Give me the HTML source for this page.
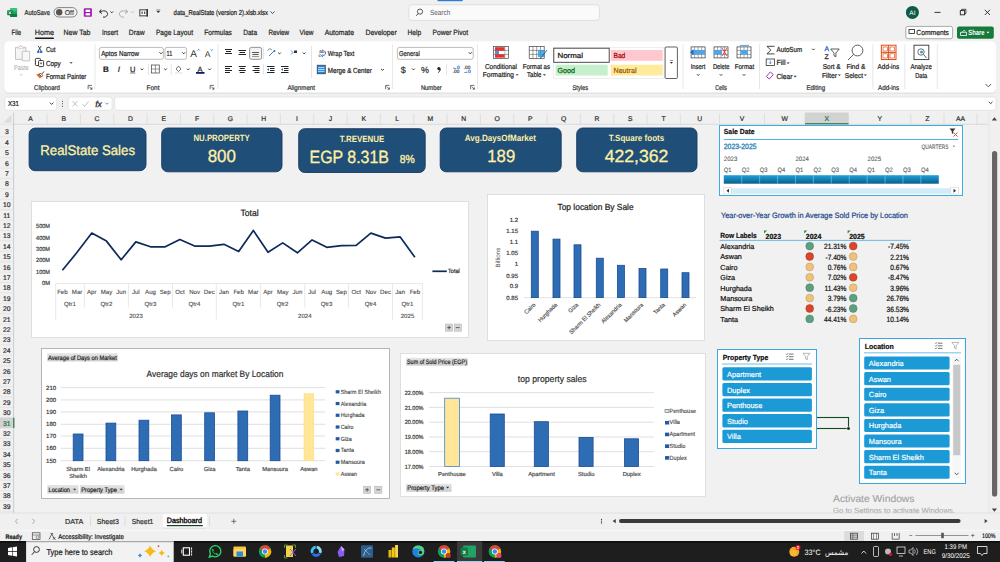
<!DOCTYPE html>
<html><head><meta charset="utf-8"><title>Excel Dashboard</title>
<style>html,body{margin:0;padding:0;background:#f0f0f0;overflow:hidden;width:1000px;height:562px}svg{display:block}text{font-family:"Liberation Sans",sans-serif}</style>
</head><body>
<svg width="1000" height="562" viewBox="0 0 1000 562" text-rendering="geometricPrecision">
<rect x="0.00" y="0.00" width="1000.00" height="562.00" fill="#f0f0f0" />
<rect x="10.00" y="8.30" width="7.10" height="8.60" fill="#21a366" rx="1" />
<rect x="10.00" y="8.30" width="7.10" height="2.90" fill="#33c481" rx="1" />
<rect x="10.00" y="14.00" width="7.10" height="2.90" fill="#107c41" rx="1" />
<rect x="7.20" y="10.20" width="5.40" height="5.00" fill="#107c41" rx="0.6" />
<path d="M8.7,11.4 l2.4,2.6 M11.1,11.4 l-2.4,2.6" fill="none" stroke="#fff" stroke-width="0.9" />
<text x="24.60" y="15.09" font-size="7.2" fill="#262626" font-family="Liberation Sans" textLength="25.40" lengthAdjust="spacingAndGlyphs" stroke="#262626" stroke-width="0.22" >AutoSave</text>
<rect x="54.00" y="7.60" width="23.00" height="9.40" fill="#f3f3f3" stroke="#555" stroke-width="0.7" rx="4.7" />
<circle cx="59.20" cy="12.30" r="3.2" fill="#555" />
<text x="64.80" y="14.92" font-size="7" fill="#333" font-family="Liberation Sans" textLength="9.00" lengthAdjust="spacingAndGlyphs" stroke="#333" stroke-width="0.12" >Off</text>
<rect x="83.80" y="8.30" width="8.10" height="8.50" fill="#a21caf" rx="0.8" />
<rect x="85.60" y="9.70" width="4.50" height="2.30" fill="#fff" />
<rect x="85.60" y="13.20" width="4.50" height="2.20" fill="#fff" />
<path d="M101,9.5 L99.5,12 L102,13.5 M99.8,12 C103,10 108,10.5 107.5,14.5 C107,17 104,17.5 103,17" fill="none" stroke="#333" stroke-width="1" />
<path d="M110.5,11.5 l1.3,1.3 l1.3,-1.3" fill="none" stroke="#222" stroke-width="0.95" />
<path d="M126,9.5 L127.5,12 L125,13.5 M127.2,12 C124,10 119,10.5 119.5,14.5 C120,17 123,17.5 124,17" fill="none" stroke="#aaa" stroke-width="1" />
<path d="M131,11.5 l1.3,1.3 l1.3,-1.3" fill="none" stroke="#aaa" stroke-width="0.8" />
<rect x="139.00" y="9.00" width="9.00" height="7.50" fill="#777" rx="0.5" />
<rect x="140.50" y="10.50" width="6.00" height="4.50" fill="#fff" />
<rect x="141.50" y="11.50" width="1.30" height="2.50" fill="#555" />
<rect x="144.00" y="11.50" width="1.30" height="2.50" fill="#555" />
<rect x="146.50" y="9.00" width="1.50" height="7.50" fill="#333" />
<path d="M156.5,11 l1.8,2 l1.8,-2 z" fill="#333" />
<line x1="156.30" y1="10.00" x2="160.30" y2="10.00" stroke="#333" stroke-width="0.6" />
<text x="173.60" y="15.39" font-size="7.2" fill="#1a1a1a" font-family="Liberation Sans" textLength="94.40" lengthAdjust="spacingAndGlyphs" stroke="#1a1a1a" stroke-width="0.22" >data_RealState (version 2).xlsb.xlsx</text>
<path d="M270.5,11.5 l2,2 l2,-2" fill="none" stroke="#222" stroke-width="0.8" />
<rect x="437.50" y="0.00" width="25.20" height="1.20" fill="#2b7cd3" />
<rect x="408.80" y="4.80" width="190.60" height="15.60" fill="#fafafa" stroke="#d6d6d6" stroke-width="0.7" rx="3" />
<circle cx="420.00" cy="11.60" r="2.6" fill="none" stroke="#444" stroke-width="0.9" />
<line x1="418.20" y1="13.50" x2="416.20" y2="15.80" stroke="#444" stroke-width="0.9" />
<text x="430.00" y="15.26" font-size="7.4" fill="#5a5a5a" font-family="Liberation Sans" textLength="20.20" lengthAdjust="spacingAndGlyphs" >Search</text>
<circle cx="912.40" cy="12.40" r="6.5" fill="#0e5a48" />
<text x="912.40" y="14.94" font-size="6.5" fill="#fff" font-family="Liberation Sans" text-anchor="middle" >AI</text>
<line x1="934.50" y1="12.40" x2="940.50" y2="12.40" stroke="#222" stroke-width="0.9" />
<rect x="960.30" y="10.60" width="4.30" height="4.20" fill="none" stroke="#222" stroke-width="0.9" />
<path d="M961.6,10.6 v-1.3 h4.3 v4.3 h-1.3" fill="none" stroke="#222" stroke-width="0.8" />
<line x1="984.80" y1="9.80" x2="990.00" y2="15.00" stroke="#222" stroke-width="0.9" />
<line x1="990.00" y1="9.80" x2="984.80" y2="15.00" stroke="#222" stroke-width="0.9" />
<text x="11.50" y="35.34" font-size="7.6" fill="#262626" font-family="Liberation Sans" textLength="9.60" lengthAdjust="spacingAndGlyphs" stroke="#262626" stroke-width="0.22" >File</text>
<text x="34.80" y="35.34" font-size="7.6" fill="#262626" font-family="Liberation Sans" textLength="19.20" lengthAdjust="spacingAndGlyphs" stroke="#262626" stroke-width="0.22" >Home</text>
<text x="63.50" y="35.34" font-size="7.6" fill="#262626" font-family="Liberation Sans" textLength="26.90" lengthAdjust="spacingAndGlyphs" stroke="#262626" stroke-width="0.22" >New Tab</text>
<text x="101.90" y="35.34" font-size="7.6" fill="#262626" font-family="Liberation Sans" textLength="16.10" lengthAdjust="spacingAndGlyphs" stroke="#262626" stroke-width="0.22" >Insert</text>
<text x="128.80" y="35.34" font-size="7.6" fill="#262626" font-family="Liberation Sans" textLength="15.80" lengthAdjust="spacingAndGlyphs" stroke="#262626" stroke-width="0.22" >Draw</text>
<text x="155.90" y="35.34" font-size="7.6" fill="#262626" font-family="Liberation Sans" textLength="37.10" lengthAdjust="spacingAndGlyphs" stroke="#262626" stroke-width="0.22" >Page Layout</text>
<text x="204.30" y="35.34" font-size="7.6" fill="#262626" font-family="Liberation Sans" textLength="27.60" lengthAdjust="spacingAndGlyphs" stroke="#262626" stroke-width="0.22" >Formulas</text>
<text x="243.20" y="35.34" font-size="7.6" fill="#262626" font-family="Liberation Sans" textLength="13.90" lengthAdjust="spacingAndGlyphs" stroke="#262626" stroke-width="0.22" >Data</text>
<text x="268.40" y="35.34" font-size="7.6" fill="#262626" font-family="Liberation Sans" textLength="20.80" lengthAdjust="spacingAndGlyphs" stroke="#262626" stroke-width="0.22" >Review</text>
<text x="299.50" y="35.34" font-size="7.6" fill="#262626" font-family="Liberation Sans" textLength="14.00" lengthAdjust="spacingAndGlyphs" stroke="#262626" stroke-width="0.22" >View</text>
<text x="324.70" y="35.34" font-size="7.6" fill="#262626" font-family="Liberation Sans" textLength="29.30" lengthAdjust="spacingAndGlyphs" stroke="#262626" stroke-width="0.22" >Automate</text>
<text x="365.50" y="35.34" font-size="7.6" fill="#262626" font-family="Liberation Sans" textLength="31.20" lengthAdjust="spacingAndGlyphs" stroke="#262626" stroke-width="0.22" >Developer</text>
<text x="407.50" y="35.34" font-size="7.6" fill="#262626" font-family="Liberation Sans" textLength="13.60" lengthAdjust="spacingAndGlyphs" stroke="#262626" stroke-width="0.22" >Help</text>
<text x="432.60" y="35.34" font-size="7.6" fill="#262626" font-family="Liberation Sans" textLength="35.50" lengthAdjust="spacingAndGlyphs" stroke="#262626" stroke-width="0.22" >Power Pivot</text>
<rect x="34.80" y="37.50" width="19.20" height="1.40" fill="#1a1a1a" rx="0.7" />
<rect x="905.80" y="26.40" width="46.80" height="12.30" fill="#fdfdfd" stroke="#8a8a8a" stroke-width="0.7" rx="2" />
<rect x="909.00" y="29.50" width="5.50" height="4.00" fill="none" stroke="#222" stroke-width="0.8" />
<text x="916.30" y="35.36" font-size="7.4" fill="#222" font-family="Liberation Sans" textLength="32.70" lengthAdjust="spacingAndGlyphs" stroke="#222" stroke-width="0.22" >Comments</text>
<rect x="957.00" y="26.40" width="36.80" height="12.30" fill="#157a3c" rx="2" />
<path d="M960.5,35.5 v-3.2 h6 v3.2 z M962,32.3 l2,-2 l1.5,1" fill="none" stroke="#fff" stroke-width="0.8" />
<text x="968.30" y="35.44" font-size="7.6" fill="#fff" font-family="Liberation Sans" font-weight="700" textLength="16.20" lengthAdjust="spacingAndGlyphs" >Share</text>
<path d="M986.5,31.8 l1.5,1.6 l1.5,-1.6 z" fill="#fff" />
<defs><filter id="sh" x="-5%" y="-20%" width="110%" height="150%"><feDropShadow dx="0" dy="0.6" stdDeviation="0.6" flood-color="#000" flood-opacity="0.18"/></filter></defs>
<rect x="4.30" y="41.20" width="991.70" height="51.40" fill="#ffffff" rx="4.5" filter="url(#sh)"/>
<line x1="95.00" y1="44.50" x2="95.00" y2="89.00" stroke="#e1e1e1" stroke-width="0.8" />
<line x1="218.00" y1="44.50" x2="218.00" y2="89.00" stroke="#e1e1e1" stroke-width="0.8" />
<line x1="392.60" y1="44.50" x2="392.60" y2="89.00" stroke="#e1e1e1" stroke-width="0.8" />
<line x1="477.50" y1="44.50" x2="477.50" y2="89.00" stroke="#e1e1e1" stroke-width="0.8" />
<line x1="683.00" y1="44.50" x2="683.00" y2="89.00" stroke="#e1e1e1" stroke-width="0.8" />
<line x1="759.50" y1="44.50" x2="759.50" y2="89.00" stroke="#e1e1e1" stroke-width="0.8" />
<line x1="872.80" y1="44.50" x2="872.80" y2="89.00" stroke="#e1e1e1" stroke-width="0.8" />
<line x1="904.80" y1="44.50" x2="904.80" y2="89.00" stroke="#e1e1e1" stroke-width="0.8" />
<line x1="937.30" y1="44.50" x2="937.30" y2="89.00" stroke="#e1e1e1" stroke-width="0.8" />
<text x="34.00" y="89.88" font-size="6.9" fill="#333" font-family="Liberation Sans" textLength="26.00" lengthAdjust="spacingAndGlyphs" stroke="#333" stroke-width="0.22" >Clipboard</text>
<text x="146.50" y="89.88" font-size="6.9" fill="#333" font-family="Liberation Sans" textLength="13.00" lengthAdjust="spacingAndGlyphs" stroke="#333" stroke-width="0.22" >Font</text>
<text x="287.50" y="89.88" font-size="6.9" fill="#333" font-family="Liberation Sans" textLength="27.50" lengthAdjust="spacingAndGlyphs" stroke="#333" stroke-width="0.22" >Alignment</text>
<text x="420.90" y="89.88" font-size="6.9" fill="#333" font-family="Liberation Sans" textLength="20.80" lengthAdjust="spacingAndGlyphs" stroke="#333" stroke-width="0.22" >Number</text>
<text x="572.50" y="89.88" font-size="6.9" fill="#333" font-family="Liberation Sans" textLength="15.50" lengthAdjust="spacingAndGlyphs" stroke="#333" stroke-width="0.22" >Styles</text>
<text x="715.20" y="89.88" font-size="6.9" fill="#333" font-family="Liberation Sans" textLength="11.80" lengthAdjust="spacingAndGlyphs" stroke="#333" stroke-width="0.22" >Cells</text>
<text x="806.40" y="89.88" font-size="6.9" fill="#333" font-family="Liberation Sans" textLength="18.70" lengthAdjust="spacingAndGlyphs" stroke="#333" stroke-width="0.22" >Editing</text>
<text x="878.00" y="89.88" font-size="6.9" fill="#333" font-family="Liberation Sans" textLength="21.20" lengthAdjust="spacingAndGlyphs" stroke="#333" stroke-width="0.22" >Add-ins</text>
<path d="M88.1,89.2 v-3.8 h3.8 M89.3,86.6 l2.6,2.6 M91.9,87.4 v1.8 h-1.8" fill="none" stroke="#333" stroke-width="0.7" />
<path d="M210.1,89.2 v-3.8 h3.8 M211.3,86.6 l2.6,2.6 M213.9,87.4 v1.8 h-1.8" fill="none" stroke="#333" stroke-width="0.7" />
<path d="M385.6,89.2 v-3.8 h3.8 M386.8,86.6 l2.6,2.6 M389.4,87.4 v1.8 h-1.8" fill="none" stroke="#333" stroke-width="0.7" />
<path d="M470.6,89.2 v-3.8 h3.8 M471.8,86.6 l2.6,2.6 M474.4,87.4 v1.8 h-1.8" fill="none" stroke="#333" stroke-width="0.7" />
<path d="M15.5,47.3 h3.2 l2,-2 l2,2 h3.2 v12.1 h-10.4 z" fill="#f5f5f5" stroke="#b5b5b5" stroke-width="0.8" />
<line x1="17.50" y1="48.60" x2="24.50" y2="48.60" stroke="#c8c8c8" stroke-width="0.6" />
<rect x="22.20" y="51.30" width="7.50" height="9.60" fill="#f7f7f7" stroke="#b5b5b5" stroke-width="0.8" rx="0.8" />
<text x="13.90" y="69.78" font-size="6.9" fill="#a0a0a0" font-family="Liberation Sans" textLength="14.90" lengthAdjust="spacingAndGlyphs" >Paste</text>
<path d="M19.8,74.2 l1.4,1.2 l1.4,-1.2" fill="none" stroke="#a0a0a0" stroke-width="0.6" />
<line x1="38.20" y1="45.90" x2="41.20" y2="51.00" stroke="#222" stroke-width="0.8" />
<line x1="41.20" y1="45.90" x2="38.20" y2="51.00" stroke="#222" stroke-width="0.8" />
<rect x="37.20" y="50.90" width="2.20" height="2.10" fill="#1e6fd0" />
<rect x="40.10" y="50.90" width="2.20" height="2.10" fill="#1e6fd0" />
<text x="45.90" y="52.43" font-size="7.3" fill="#222" font-family="Liberation Sans" textLength="9.60" lengthAdjust="spacingAndGlyphs" stroke="#222" stroke-width="0.22" >Cut</text>
<rect x="35.40" y="58.40" width="5.00" height="7.10" fill="none" stroke="#222" stroke-width="0.9" rx="0.9" />
<rect x="38.60" y="60.50" width="5.00" height="6.10" fill="#fff" stroke="#222" stroke-width="0.9" rx="0.9" />
<rect x="40.30" y="62.50" width="1.60" height="1.70" fill="#555" />
<text x="45.90" y="65.83" font-size="7.3" fill="#222" font-family="Liberation Sans" textLength="14.90" lengthAdjust="spacingAndGlyphs" stroke="#222" stroke-width="0.22" >Copy</text>
<path d="M69.5,62.2 l1.6,1.6 l1.6,-1.6 z" fill="#333" />
<path d="M36.2,74.5 l3.8,4 l2.5,-2.8 l-2.8,-2.4 z" fill="#ec6a1f" />
<path d="M39.5,74.5 l2.2,2.2 l1.2,-1.2 l-2.2,-2.2 z" fill="#fff" stroke="#222" stroke-width="0.7" />
<line x1="42.00" y1="73.80" x2="44.00" y2="71.50" stroke="#222" stroke-width="0.9" />
<text x="45.90" y="79.23" font-size="7.3" fill="#222" font-family="Liberation Sans" textLength="40.50" lengthAdjust="spacingAndGlyphs" stroke="#222" stroke-width="0.22" >Format Painter</text>
<rect x="99.40" y="47.40" width="64.00" height="11.90" fill="#fff" stroke="#8f8f8f" stroke-width="0.6" rx="2" />
<text x="101.20" y="55.83" font-size="7.3" fill="#222" font-family="Liberation Sans" textLength="37.90" lengthAdjust="spacingAndGlyphs" stroke="#222" stroke-width="0.22" >Aptos Narrow</text>
<path d="M159.5,52.3 l1.5,1.5 l1.5,-1.5" fill="none" stroke="#222" stroke-width="0.95" />
<rect x="165.00" y="47.40" width="21.60" height="11.90" fill="#fff" stroke="#8f8f8f" stroke-width="0.6" rx="2" />
<text x="166.60" y="55.83" font-size="7.3" fill="#222" font-family="Liberation Sans" textLength="5.60" lengthAdjust="spacingAndGlyphs" stroke="#222" stroke-width="0.22" >11</text>
<path d="M182.2,52.3 l1.5,1.5 l1.5,-1.5" fill="none" stroke="#222" stroke-width="0.95" />
<text x="193.50" y="57.40" font-size="10" fill="#333" font-family="Liberation Sans" text-anchor="middle" >A</text>
<path d="M197.5,50.5 l1.2,-1.2 l1.2,1.2" fill="none" stroke="#1e6fd0" stroke-width="0.7" />
<text x="207.60" y="57.06" font-size="8.5" fill="#333" font-family="Liberation Sans" text-anchor="middle" >A</text>
<path d="M210.5,49.5 l1.2,1.2 l1.2,-1.2" fill="none" stroke="#1e6fd0" stroke-width="0.7" />
<text x="106.00" y="72.08" font-size="8" fill="#222" font-family="Liberation Sans" font-weight="700" text-anchor="middle" stroke="#222" stroke-width="0.22" >B</text>
<text x="118.80" y="72.08" font-size="8" fill="#222" font-family="Liberation Serif" text-anchor="middle" stroke="#222" stroke-width="0.22" font-style="italic">I</text>
<text x="132.70" y="71.50" font-size="7.5" fill="#222" font-family="Liberation Sans" text-anchor="middle" stroke="#222" stroke-width="0.22" >U</text>
<line x1="130.00" y1="73.00" x2="135.40" y2="73.00" stroke="#222" stroke-width="0.6" />
<path d="M140.7,68.6 l1.3,1.3 l1.3,-1.3" fill="none" stroke="#222" stroke-width="0.95" />
<path d="M164.2,68.6 l1.3,1.3 l1.3,-1.3" fill="none" stroke="#222" stroke-width="0.95" />
<path d="M187.0,68.6 l1.3,1.3 l1.3,-1.3" fill="none" stroke="#222" stroke-width="0.95" />
<path d="M208.29999999999998,68.6 l1.3,1.3 l1.3,-1.3" fill="none" stroke="#222" stroke-width="0.95" />
<line x1="148.50" y1="64.00" x2="148.50" y2="75.00" stroke="#d8d8d8" stroke-width="0.7" />
<rect x="151.50" y="65.00" width="7.80" height="8.00" fill="none" stroke="#555" stroke-width="0.8" />
<line x1="155.40" y1="65.00" x2="155.40" y2="73.00" stroke="#555" stroke-width="0.6" />
<line x1="151.50" y1="69.00" x2="159.30" y2="69.00" stroke="#555" stroke-width="0.6" />
<line x1="171.30" y1="64.00" x2="171.30" y2="75.00" stroke="#d8d8d8" stroke-width="0.7" />
<path d="M176,69 l2.5,-3 l2.5,3 l-2.5,2.5 z" fill="none" stroke="#333" stroke-width="0.7" />
<rect x="175.00" y="72.30" width="7.50" height="1.30" fill="#e6e6e6" />
<text x="200.00" y="71.50" font-size="7.5" fill="#333" font-family="Liberation Sans" text-anchor="middle" stroke="#333" stroke-width="0.22" >A</text>
<rect x="196.00" y="72.00" width="8.50" height="1.80" fill="#0e1d6b" />
<line x1="225.00" y1="49.50" x2="232.00" y2="49.50" stroke="#222" stroke-width="1" />
<line x1="226.00" y1="51.50" x2="231.00" y2="51.50" stroke="#222" stroke-width="1" />
<line x1="225.00" y1="53.50" x2="232.00" y2="53.50" stroke="#222" stroke-width="1" />
<line x1="238.50" y1="50.50" x2="246.00" y2="50.50" stroke="#222" stroke-width="1" />
<line x1="239.50" y1="52.50" x2="245.00" y2="52.50" stroke="#222" stroke-width="1" />
<line x1="238.50" y1="54.50" x2="246.00" y2="54.50" stroke="#222" stroke-width="1" />
<rect x="249.60" y="47.40" width="12.00" height="11.90" fill="#f3f3f3" stroke="#7a7a7a" stroke-width="0.8" rx="1.8" />
<line x1="252.00" y1="52.50" x2="259.00" y2="52.50" stroke="#555" stroke-width="1" />
<line x1="252.50" y1="54.50" x2="258.50" y2="54.50" stroke="#555" stroke-width="1" />
<line x1="252.00" y1="56.50" x2="259.00" y2="56.50" stroke="#999" stroke-width="1" />
<line x1="263.40" y1="46.50" x2="263.40" y2="59.00" stroke="#d8d8d8" stroke-width="0.7" />
<line x1="263.40" y1="64.00" x2="263.40" y2="75.00" stroke="#d8d8d8" stroke-width="0.7" />
<path d="M269,56 l5,-5" fill="none" stroke="#1e6fd0" stroke-width="0.9" />
<circle cx="274.50" cy="51.00" r="0.9" fill="#1e6fd0" />
<path d="M267.5,50.5 l2.5,-2 l2,1.5" fill="none" stroke="#444" stroke-width="0.6" />
<path d="M278.2,52.6 l1.3,1.3 l1.3,-1.3" fill="none" stroke="#222" stroke-width="0.95" />
<line x1="225.00" y1="66.50" x2="232.00" y2="66.50" stroke="#222" stroke-width="1" />
<line x1="238.75" y1="66.50" x2="245.75" y2="66.50" stroke="#222" stroke-width="1" />
<line x1="252.50" y1="66.50" x2="259.50" y2="66.50" stroke="#222" stroke-width="1" />
<line x1="225.00" y1="68.50" x2="230.00" y2="68.50" stroke="#222" stroke-width="1" />
<line x1="239.75" y1="68.50" x2="244.75" y2="68.50" stroke="#222" stroke-width="1" />
<line x1="254.50" y1="68.50" x2="259.50" y2="68.50" stroke="#222" stroke-width="1" />
<line x1="225.00" y1="70.50" x2="232.00" y2="70.50" stroke="#222" stroke-width="1" />
<line x1="238.75" y1="70.50" x2="245.75" y2="70.50" stroke="#222" stroke-width="1" />
<line x1="252.50" y1="70.50" x2="259.50" y2="70.50" stroke="#222" stroke-width="1" />
<line x1="225.00" y1="72.50" x2="230.00" y2="72.50" stroke="#222" stroke-width="1" />
<line x1="239.75" y1="72.50" x2="244.75" y2="72.50" stroke="#222" stroke-width="1" />
<line x1="254.50" y1="72.50" x2="259.50" y2="72.50" stroke="#222" stroke-width="1" />
<line x1="267.00" y1="66.50" x2="274.50" y2="66.50" stroke="#222" stroke-width="1" />
<line x1="270.00" y1="68.50" x2="274.50" y2="68.50" stroke="#222" stroke-width="1" />
<line x1="270.00" y1="70.50" x2="274.50" y2="70.50" stroke="#222" stroke-width="1" />
<line x1="267.00" y1="72.50" x2="274.50" y2="72.50" stroke="#222" stroke-width="1" />
<path d="M267,69.5 l2,-1.6 v3.2 z" fill="#1e6fd0" />
<line x1="281.00" y1="66.50" x2="288.50" y2="66.50" stroke="#222" stroke-width="1" />
<line x1="284.00" y1="68.50" x2="288.50" y2="68.50" stroke="#222" stroke-width="1" />
<line x1="284.00" y1="70.50" x2="288.50" y2="70.50" stroke="#222" stroke-width="1" />
<line x1="281.00" y1="72.50" x2="288.50" y2="72.50" stroke="#222" stroke-width="1" />
<path d="M281,69.5 l2,-1.6 v3.2 z" fill="#1e6fd0" />
<path d="M291,50.5 l2,2 l-2,2" fill="none" stroke="#1e6fd0" stroke-width="0.8" />
<rect x="294.00" y="50.50" width="3.00" height="2.50" fill="#333" />
<path d="M302.8,52.6 l1.3,1.3 l1.3,-1.3" fill="none" stroke="#222" stroke-width="0.95" />
<line x1="311.50" y1="46.00" x2="311.50" y2="78.00" stroke="#d8d8d8" stroke-width="0.7" />
<text x="322.00" y="52.53" font-size="4.8" fill="#333" font-family="Liberation Sans" text-anchor="middle" stroke="#333" stroke-width="0.1" >ab</text>
<text x="319.60" y="57.03" font-size="4.8" fill="#333" font-family="Liberation Sans" text-anchor="middle" stroke="#333" stroke-width="0.1" >c</text>
<path d="M325.5,51.5 q1,3.5 -3.2,4.3" fill="none" stroke="#1e6fd0" stroke-width="0.9" />
<path d="M322.8,54.3 l-1.4,1.6 l1.8,1" fill="none" stroke="#1e6fd0" stroke-width="0.8" />
<text x="327.80" y="56.43" font-size="7.3" fill="#222" font-family="Liberation Sans" textLength="26.70" lengthAdjust="spacingAndGlyphs" stroke="#222" stroke-width="0.22" >Wrap Text</text>
<rect x="317.20" y="65.20" width="8.10" height="8.60" fill="#1e88e5" stroke="#3a3a3a" stroke-width="0.7" />
<line x1="318.00" y1="67.60" x2="324.50" y2="67.60" stroke="#fff" stroke-width="0.7" />
<line x1="318.00" y1="69.50" x2="324.50" y2="69.50" stroke="#fff" stroke-width="0.7" />
<line x1="318.00" y1="71.40" x2="324.50" y2="71.40" stroke="#fff" stroke-width="0.7" />
<text x="327.80" y="72.83" font-size="7.3" fill="#222" font-family="Liberation Sans" textLength="44.00" lengthAdjust="spacingAndGlyphs" stroke="#222" stroke-width="0.22" >Merge &amp; Center</text>
<path d="M381.2,69 l1.3,1.3 l1.3,-1.3" fill="none" stroke="#222" stroke-width="0.95" />
<rect x="397.40" y="47.40" width="75.80" height="11.90" fill="#fff" stroke="#8f8f8f" stroke-width="0.6" rx="2" />
<text x="399.00" y="55.76" font-size="7.1" fill="#222" font-family="Liberation Sans" textLength="20.80" lengthAdjust="spacingAndGlyphs" stroke="#222" stroke-width="0.22" >General</text>
<path d="M468.8,52.3 l1.5,1.5 l1.5,-1.5" fill="none" stroke="#222" stroke-width="0.95" />
<text x="403.30" y="73.24" font-size="9" fill="#333" font-family="Liberation Sans" text-anchor="middle" stroke="#333" stroke-width="0.22" >$</text>
<path d="M412.1,68.6 l1.3,1.3 l1.3,-1.3" fill="none" stroke="#222" stroke-width="0.95" />
<text x="425.00" y="73.04" font-size="9" fill="#333" font-family="Liberation Sans" text-anchor="middle" stroke="#333" stroke-width="0.22" >%</text>
<circle cx="438.90" cy="68.60" r="1.6" fill="#222" />
<path d="M440.3,69 q0,2.5 -2.2,3.6" fill="none" stroke="#222" stroke-width="1" />
<line x1="446.50" y1="64.00" x2="446.50" y2="75.00" stroke="#d8d8d8" stroke-width="0.7" />
<text x="456.00" y="69.03" font-size="4.8" fill="#1e6fd0" font-family="Liberation Sans" text-anchor="middle" stroke="#1e6fd0" stroke-width="0.22" >←0</text>
<text x="456.00" y="73.23" font-size="4.8" fill="#555" font-family="Liberation Sans" text-anchor="middle" stroke="#555" stroke-width="0.22" >.00</text>
<text x="467.00" y="69.03" font-size="4.8" fill="#555" font-family="Liberation Sans" text-anchor="middle" stroke="#555" stroke-width="0.22" >.00</text>
<text x="467.00" y="73.23" font-size="4.8" fill="#1e6fd0" font-family="Liberation Sans" text-anchor="middle" stroke="#1e6fd0" stroke-width="0.22" >→0</text>
<rect x="493.50" y="46.40" width="15.00" height="12.00" fill="#fff" stroke="#444" stroke-width="0.7" />
<line x1="497.25" y1="46.40" x2="497.25" y2="58.40" stroke="#444" stroke-width="0.5" />
<line x1="501.00" y1="46.40" x2="501.00" y2="58.40" stroke="#444" stroke-width="0.5" />
<line x1="504.75" y1="46.40" x2="504.75" y2="58.40" stroke="#444" stroke-width="0.5" />
<line x1="493.50" y1="50.40" x2="508.50" y2="50.40" stroke="#444" stroke-width="0.5" />
<line x1="493.50" y1="54.40" x2="508.50" y2="54.40" stroke="#444" stroke-width="0.5" />
<rect x="495.00" y="47.20" width="9.50" height="3.60" fill="#e8312f" />
<rect x="495.00" y="51.00" width="4.00" height="3.00" fill="#2f9ee5" />
<rect x="499.00" y="51.00" width="5.50" height="3.00" fill="#fff" />
<rect x="495.00" y="54.20" width="9.50" height="3.40" fill="#e8312f" />
<text x="485.00" y="69.16" font-size="7.1" fill="#222" font-family="Liberation Sans" textLength="32.00" lengthAdjust="spacingAndGlyphs" stroke="#222" stroke-width="0.22" >Conditional</text>
<text x="482.80" y="77.36" font-size="7.1" fill="#222" font-family="Liberation Sans" textLength="31.20" lengthAdjust="spacingAndGlyphs" stroke="#222" stroke-width="0.22" >Formatting</text>
<path d="M515.5,74.2 l1.6,1.6 l1.6,-1.6 z" fill="#333" />
<rect x="529.20" y="46.40" width="15.00" height="12.00" fill="#fff" stroke="#444" stroke-width="0.7" />
<line x1="532.95" y1="46.40" x2="532.95" y2="58.40" stroke="#444" stroke-width="0.5" />
<line x1="536.70" y1="46.40" x2="536.70" y2="58.40" stroke="#444" stroke-width="0.5" />
<line x1="540.45" y1="46.40" x2="540.45" y2="58.40" stroke="#444" stroke-width="0.5" />
<line x1="529.20" y1="50.40" x2="544.20" y2="50.40" stroke="#444" stroke-width="0.5" />
<line x1="529.20" y1="54.40" x2="544.20" y2="54.40" stroke="#444" stroke-width="0.5" />
<rect x="538.00" y="50.00" width="7.00" height="7.00" fill="#2f9ee5" opacity="0.85"/>
<path d="M540,59 l7,-9" fill="none" stroke="#555" stroke-width="0.9" />
<text x="522.80" y="69.16" font-size="7.1" fill="#222" font-family="Liberation Sans" textLength="27.20" lengthAdjust="spacingAndGlyphs" stroke="#222" stroke-width="0.22" >Format as</text>
<text x="527.00" y="77.36" font-size="7.1" fill="#222" font-family="Liberation Sans" textLength="14.50" lengthAdjust="spacingAndGlyphs" stroke="#222" stroke-width="0.22" >Table</text>
<path d="M542.8,74.2 l1.6,1.6 l1.6,-1.6 z" fill="#333" />
<rect x="553.30" y="47.30" width="110.70" height="31.20" fill="#fff" stroke="#e3e3e3" stroke-width="0.6" />
<rect x="553.80" y="48.20" width="55.40" height="14.10" fill="#fff" stroke="#3a3a3a" stroke-width="0.9" />
<text x="557.50" y="57.93" font-size="7.3" fill="#111" font-family="Liberation Sans" textLength="25.50" lengthAdjust="spacingAndGlyphs" stroke="#111" stroke-width="0.22" >Normal</text>
<rect x="610.70" y="50.00" width="52.00" height="10.80" fill="#ffc7ce" />
<text x="613.50" y="57.93" font-size="7.3" fill="#9c0006" font-family="Liberation Sans" textLength="11.80" lengthAdjust="spacingAndGlyphs" stroke="#9c0006" stroke-width="0.22" >Bad</text>
<rect x="555.70" y="64.70" width="52.00" height="10.80" fill="#c6efce" />
<text x="557.50" y="72.83" font-size="7.3" fill="#006100" font-family="Liberation Sans" textLength="17.50" lengthAdjust="spacingAndGlyphs" stroke="#006100" stroke-width="0.22" >Good</text>
<rect x="610.70" y="64.70" width="52.00" height="10.80" fill="#ffeb9c" />
<text x="613.50" y="72.83" font-size="7.3" fill="#9c5700" font-family="Liberation Sans" textLength="23.00" lengthAdjust="spacingAndGlyphs" stroke="#9c5700" stroke-width="0.22" >Neutral</text>
<rect x="665.10" y="47.00" width="12.30" height="31.50" fill="#fff" stroke="#3a3a3a" stroke-width="0.8" rx="1" />
<path d="M669.8,62 l1.6,1.8 l1.6,-1.8 z" fill="#333" />
<line x1="669.80" y1="60.50" x2="673.00" y2="60.50" stroke="#333" stroke-width="0.5" />
<rect x="691.10" y="46.90" width="14.00" height="11.00" fill="#fff" stroke="#333" stroke-width="0.7" />
<line x1="694.60" y1="46.90" x2="694.60" y2="57.90" stroke="#555" stroke-width="0.5" />
<line x1="698.10" y1="46.90" x2="698.10" y2="57.90" stroke="#555" stroke-width="0.5" />
<line x1="701.60" y1="46.90" x2="701.60" y2="57.90" stroke="#555" stroke-width="0.5" />
<line x1="691.10" y1="50.40" x2="705.10" y2="50.40" stroke="#555" stroke-width="0.5" />
<line x1="691.10" y1="54.40" x2="705.10" y2="54.40" stroke="#555" stroke-width="0.5" />
<rect x="691.00" y="50.00" width="14.00" height="4.50" fill="#4ea5e8" />
<path d="M690,52.3 l3.5,-3 v6 z" fill="#1e6fd0" />
<rect x="714.00" y="46.90" width="14.00" height="11.00" fill="#fff" stroke="#333" stroke-width="0.7" />
<line x1="717.50" y1="46.90" x2="717.50" y2="57.90" stroke="#555" stroke-width="0.5" />
<line x1="721.00" y1="46.90" x2="721.00" y2="57.90" stroke="#555" stroke-width="0.5" />
<line x1="724.50" y1="46.90" x2="724.50" y2="57.90" stroke="#555" stroke-width="0.5" />
<line x1="714.00" y1="50.40" x2="728.00" y2="50.40" stroke="#555" stroke-width="0.5" />
<line x1="714.00" y1="54.40" x2="728.00" y2="54.40" stroke="#555" stroke-width="0.5" />
<rect x="714.00" y="50.00" width="8.00" height="4.50" fill="#4ea5e8" />
<line x1="722.00" y1="48.00" x2="727.00" y2="56.00" stroke="#e8312f" stroke-width="0.9" />
<line x1="727.00" y1="48.00" x2="722.00" y2="56.00" stroke="#e8312f" stroke-width="0.9" />
<rect x="737.00" y="46.90" width="14.00" height="11.00" fill="#fff" stroke="#333" stroke-width="0.7" />
<line x1="740.50" y1="46.90" x2="740.50" y2="57.90" stroke="#555" stroke-width="0.5" />
<line x1="744.00" y1="46.90" x2="744.00" y2="57.90" stroke="#555" stroke-width="0.5" />
<line x1="747.50" y1="46.90" x2="747.50" y2="57.90" stroke="#555" stroke-width="0.5" />
<line x1="737.00" y1="50.40" x2="751.00" y2="50.40" stroke="#555" stroke-width="0.5" />
<line x1="737.00" y1="54.40" x2="751.00" y2="54.40" stroke="#555" stroke-width="0.5" />
<rect x="741.00" y="50.00" width="7.00" height="4.50" fill="#4ea5e8" />
<line x1="740.00" y1="45.40" x2="749.00" y2="45.40" stroke="#4ea5e8" stroke-width="1" />
<text x="690.70" y="69.36" font-size="7.1" fill="#222" font-family="Liberation Sans" textLength="14.70" lengthAdjust="spacingAndGlyphs" stroke="#222" stroke-width="0.22" >Insert</text>
<text x="712.90" y="69.36" font-size="7.1" fill="#222" font-family="Liberation Sans" textLength="16.70" lengthAdjust="spacingAndGlyphs" stroke="#222" stroke-width="0.22" >Delete</text>
<text x="734.70" y="69.36" font-size="7.1" fill="#222" font-family="Liberation Sans" textLength="19.50" lengthAdjust="spacingAndGlyphs" stroke="#222" stroke-width="0.22" >Format</text>
<path d="M697.0,74.3 l1.2,1.2 l1.2,-1.2" fill="none" stroke="#222" stroke-width="0.95" />
<path d="M719.8,74.3 l1.2,1.2 l1.2,-1.2" fill="none" stroke="#222" stroke-width="0.95" />
<path d="M742.8,74.3 l1.2,1.2 l1.2,-1.2" fill="none" stroke="#222" stroke-width="0.95" />
<path d="M774.5,46.3 h-7.6 l4,3.8 l-4,3.8 h7.6" fill="none" stroke="#333" stroke-width="0.9" />
<text x="776.50" y="52.23" font-size="7.3" fill="#222" font-family="Liberation Sans" textLength="25.70" lengthAdjust="spacingAndGlyphs" stroke="#222" stroke-width="0.22" >AutoSum</text>
<path d="M812.2,48.8 l1.2,1.2 l1.2,-1.2" fill="none" stroke="#222" stroke-width="0.95" />
<rect x="766.20" y="59.00" width="8.20" height="6.50" fill="#fff" stroke="#333" stroke-width="0.8" />
<path d="M770.3,60.5 v3 M769,62.5 l1.3,1.3 l1.3,-1.3" fill="none" stroke="#1e6fd0" stroke-width="0.7" />
<text x="776.50" y="65.43" font-size="7.3" fill="#222" font-family="Liberation Sans" textLength="9.00" lengthAdjust="spacingAndGlyphs" stroke="#222" stroke-width="0.22" >Fill</text>
<path d="M786.5,62.5 l1.6,1.6 l1.6,-1.6 z" fill="#333" />
<path d="M766.3,76.5 l4,-4.5 l3,2.5 l-4,4.5 z" fill="#fff" stroke="#a637b8" stroke-width="1" />
<text x="776.50" y="78.83" font-size="7.3" fill="#222" font-family="Liberation Sans" textLength="16.00" lengthAdjust="spacingAndGlyphs" stroke="#222" stroke-width="0.22" >Clear</text>
<path d="M793.5,75.8 l1.6,1.6 l1.6,-1.6 z" fill="#333" />
<text x="826.70" y="51.35" font-size="6.8" fill="#1e6fd0" font-family="Liberation Sans" text-anchor="middle" stroke="#1e6fd0" stroke-width="0.3" >A</text>
<text x="826.70" y="58.65" font-size="6.8" fill="#333" font-family="Liberation Sans" text-anchor="middle" stroke="#333" stroke-width="0.3" >Z</text>
<path d="M830.7,49 h8.5 l-3.3,4 v3.7 l-1.9,-0.9 v-2.8 z" fill="none" stroke="#333" stroke-width="0.8" />
<text x="822.80" y="69.36" font-size="7.1" fill="#222" font-family="Liberation Sans" textLength="17.80" lengthAdjust="spacingAndGlyphs" stroke="#222" stroke-width="0.22" >Sort &amp;</text>
<text x="821.90" y="77.56" font-size="7.1" fill="#222" font-family="Liberation Sans" textLength="15.10" lengthAdjust="spacingAndGlyphs" stroke="#222" stroke-width="0.22" >Filter</text>
<path d="M837.8,74.5 l1.6,1.6 l1.6,-1.6 z" fill="#333" />
<circle cx="857.50" cy="50.50" r="5.4" fill="none" stroke="#333" stroke-width="0.8" />
<line x1="853.70" y1="54.30" x2="848.00" y2="60.00" stroke="#333" stroke-width="0.8" />
<text x="846.40" y="69.36" font-size="7.1" fill="#222" font-family="Liberation Sans" textLength="18.90" lengthAdjust="spacingAndGlyphs" stroke="#222" stroke-width="0.22" >Find &amp;</text>
<text x="844.80" y="77.56" font-size="7.1" fill="#222" font-family="Liberation Sans" textLength="18.20" lengthAdjust="spacingAndGlyphs" stroke="#222" stroke-width="0.22" >Select</text>
<path d="M863.8,74.5 l1.6,1.6 l1.6,-1.6 z" fill="#333" />
<rect x="881.30" y="45.20" width="14.70" height="14.40" fill="none" stroke="#d83b01" stroke-width="0.9" />
<line x1="888.65" y1="45.20" x2="888.65" y2="59.60" stroke="#d83b01" stroke-width="0.9" />
<line x1="881.30" y1="52.40" x2="896.00" y2="52.40" stroke="#d83b01" stroke-width="0.9" />
<rect x="883.00" y="47.00" width="4.30" height="4.00" fill="none" stroke="#d83b01" stroke-width="0.6" />
<rect x="890.00" y="47.00" width="4.30" height="4.00" fill="none" stroke="#d83b01" stroke-width="0.6" />
<rect x="883.00" y="53.80" width="4.30" height="4.20" fill="none" stroke="#d83b01" stroke-width="0.6" />
<rect x="890.00" y="53.80" width="4.30" height="4.20" fill="none" stroke="#d83b01" stroke-width="0.6" />
<text x="877.60" y="69.36" font-size="7.1" fill="#222" font-family="Liberation Sans" textLength="21.60" lengthAdjust="spacingAndGlyphs" stroke="#222" stroke-width="0.22" >Add-ins</text>
<rect x="914.00" y="45.20" width="14.80" height="14.40" fill="#fff" stroke="#333" stroke-width="0.9" />
<circle cx="921.00" cy="52.00" r="3.2" fill="none" stroke="#333" stroke-width="0.7" />
<circle cx="921.50" cy="52.00" r="1.5" fill="#2f9ee5" />
<line x1="923.50" y1="54.50" x2="926.50" y2="58.00" stroke="#333" stroke-width="0.8" />
<text x="910.40" y="69.36" font-size="7.1" fill="#222" font-family="Liberation Sans" textLength="21.60" lengthAdjust="spacingAndGlyphs" stroke="#222" stroke-width="0.22" >Analyze</text>
<text x="915.20" y="77.56" font-size="7.1" fill="#222" font-family="Liberation Sans" textLength="12.00" lengthAdjust="spacingAndGlyphs" stroke="#222" stroke-width="0.22" >Data</text>
<path d="M985.5,84 l2.8,2.8 l2.8,-2.8" fill="none" stroke="#333" stroke-width="0.8" />
<rect x="4.80" y="97.00" width="51.90" height="13.30" fill="#fff" stroke="#dcdcdc" stroke-width="0.7" rx="2.5" />
<text x="8.00" y="106.39" font-size="7.2" fill="#222" font-family="Liberation Sans" textLength="11.00" lengthAdjust="spacingAndGlyphs" stroke="#222" stroke-width="0.22" >X31</text>
<path d="M49.8,102.6 l1.8,1.8 l1.8,-1.8" fill="none" stroke="#333" stroke-width="0.9" />
<circle cx="62.50" cy="101.30" r="0.55" fill="#333" />
<circle cx="62.50" cy="103.80" r="0.55" fill="#333" />
<circle cx="62.50" cy="106.30" r="0.55" fill="#333" />
<rect x="68.20" y="97.00" width="43.90" height="13.30" fill="#fff" stroke="#dcdcdc" stroke-width="0.7" rx="2.5" />
<line x1="72.50" y1="101.00" x2="77.50" y2="106.50" stroke="#aaa" stroke-width="0.7" />
<line x1="77.50" y1="101.00" x2="72.50" y2="106.50" stroke="#aaa" stroke-width="0.7" />
<path d="M82.5,104 l2,2.5 l4,-5" fill="none" stroke="#aaa" stroke-width="0.7" />
<text x="98.50" y="106.70" font-size="8.6" fill="#222" font-family="Liberation Serif" text-anchor="middle" stroke="#222" stroke-width="0.25" font-style="italic">fx</text>
<path d="M105.5,102.8 l1.5,1.5 l1.5,-1.5" fill="none" stroke="#555" stroke-width="0.7" />
<rect x="114.70" y="97.00" width="881.30" height="13.30" fill="#fff" stroke="#dcdcdc" stroke-width="0.7" rx="2.5" />
<path d="M988.9,101.8 l1.8,1.8 l1.8,-1.8" fill="none" stroke="#222" stroke-width="0.9" />
<rect x="0.00" y="112.50" width="988.50" height="11.80" fill="#f0f0f0" />
<rect x="0.00" y="124.30" width="988.50" height="388.70" fill="#f1f1f1" />
<rect x="805.00" y="112.50" width="43.50" height="11.80" fill="#d2d2d2" />
<line x1="47.08" y1="113.50" x2="47.08" y2="124.30" stroke="#d4d4d4" stroke-width="0.6" />
<text x="30.41" y="121.35" font-size="6.8" fill="#333" font-family="Liberation Sans" text-anchor="middle" stroke="#333" stroke-width="0.22" >A</text>
<line x1="80.41" y1="113.50" x2="80.41" y2="124.30" stroke="#d4d4d4" stroke-width="0.6" />
<text x="63.74" y="121.35" font-size="6.8" fill="#333" font-family="Liberation Sans" text-anchor="middle" stroke="#333" stroke-width="0.22" >B</text>
<line x1="113.74" y1="113.50" x2="113.74" y2="124.30" stroke="#d4d4d4" stroke-width="0.6" />
<text x="97.07" y="121.35" font-size="6.8" fill="#333" font-family="Liberation Sans" text-anchor="middle" stroke="#333" stroke-width="0.22" >C</text>
<line x1="147.07" y1="113.50" x2="147.07" y2="124.30" stroke="#d4d4d4" stroke-width="0.6" />
<text x="130.41" y="121.35" font-size="6.8" fill="#333" font-family="Liberation Sans" text-anchor="middle" stroke="#333" stroke-width="0.22" >D</text>
<line x1="180.40" y1="113.50" x2="180.40" y2="124.30" stroke="#d4d4d4" stroke-width="0.6" />
<text x="163.73" y="121.35" font-size="6.8" fill="#333" font-family="Liberation Sans" text-anchor="middle" stroke="#333" stroke-width="0.22" >E</text>
<line x1="213.73" y1="113.50" x2="213.73" y2="124.30" stroke="#d4d4d4" stroke-width="0.6" />
<text x="197.06" y="121.35" font-size="6.8" fill="#333" font-family="Liberation Sans" text-anchor="middle" stroke="#333" stroke-width="0.22" >F</text>
<line x1="247.06" y1="113.50" x2="247.06" y2="124.30" stroke="#d4d4d4" stroke-width="0.6" />
<text x="230.39" y="121.35" font-size="6.8" fill="#333" font-family="Liberation Sans" text-anchor="middle" stroke="#333" stroke-width="0.22" >G</text>
<line x1="280.39" y1="113.50" x2="280.39" y2="124.30" stroke="#d4d4d4" stroke-width="0.6" />
<text x="263.72" y="121.35" font-size="6.8" fill="#333" font-family="Liberation Sans" text-anchor="middle" stroke="#333" stroke-width="0.22" >H</text>
<line x1="313.72" y1="113.50" x2="313.72" y2="124.30" stroke="#d4d4d4" stroke-width="0.6" />
<text x="297.05" y="121.35" font-size="6.8" fill="#333" font-family="Liberation Sans" text-anchor="middle" stroke="#333" stroke-width="0.22" >I</text>
<line x1="347.05" y1="113.50" x2="347.05" y2="124.30" stroke="#d4d4d4" stroke-width="0.6" />
<text x="330.38" y="121.35" font-size="6.8" fill="#333" font-family="Liberation Sans" text-anchor="middle" stroke="#333" stroke-width="0.22" >J</text>
<line x1="380.38" y1="113.50" x2="380.38" y2="124.30" stroke="#d4d4d4" stroke-width="0.6" />
<text x="363.71" y="121.35" font-size="6.8" fill="#333" font-family="Liberation Sans" text-anchor="middle" stroke="#333" stroke-width="0.22" >K</text>
<line x1="413.71" y1="113.50" x2="413.71" y2="124.30" stroke="#d4d4d4" stroke-width="0.6" />
<text x="397.04" y="121.35" font-size="6.8" fill="#333" font-family="Liberation Sans" text-anchor="middle" stroke="#333" stroke-width="0.22" >L</text>
<line x1="447.04" y1="113.50" x2="447.04" y2="124.30" stroke="#d4d4d4" stroke-width="0.6" />
<text x="430.37" y="121.35" font-size="6.8" fill="#333" font-family="Liberation Sans" text-anchor="middle" stroke="#333" stroke-width="0.22" >M</text>
<line x1="480.37" y1="113.50" x2="480.37" y2="124.30" stroke="#d4d4d4" stroke-width="0.6" />
<text x="463.70" y="121.35" font-size="6.8" fill="#333" font-family="Liberation Sans" text-anchor="middle" stroke="#333" stroke-width="0.22" >N</text>
<line x1="513.70" y1="113.50" x2="513.70" y2="124.30" stroke="#d4d4d4" stroke-width="0.6" />
<text x="497.03" y="121.35" font-size="6.8" fill="#333" font-family="Liberation Sans" text-anchor="middle" stroke="#333" stroke-width="0.22" >O</text>
<line x1="547.03" y1="113.50" x2="547.03" y2="124.30" stroke="#d4d4d4" stroke-width="0.6" />
<text x="530.36" y="121.35" font-size="6.8" fill="#333" font-family="Liberation Sans" text-anchor="middle" stroke="#333" stroke-width="0.22" >P</text>
<line x1="580.36" y1="113.50" x2="580.36" y2="124.30" stroke="#d4d4d4" stroke-width="0.6" />
<text x="563.69" y="121.35" font-size="6.8" fill="#333" font-family="Liberation Sans" text-anchor="middle" stroke="#333" stroke-width="0.22" >Q</text>
<line x1="613.69" y1="113.50" x2="613.69" y2="124.30" stroke="#d4d4d4" stroke-width="0.6" />
<text x="597.02" y="121.35" font-size="6.8" fill="#333" font-family="Liberation Sans" text-anchor="middle" stroke="#333" stroke-width="0.22" >R</text>
<line x1="647.02" y1="113.50" x2="647.02" y2="124.30" stroke="#d4d4d4" stroke-width="0.6" />
<text x="630.36" y="121.35" font-size="6.8" fill="#333" font-family="Liberation Sans" text-anchor="middle" stroke="#333" stroke-width="0.22" >S</text>
<line x1="680.35" y1="113.50" x2="680.35" y2="124.30" stroke="#d4d4d4" stroke-width="0.6" />
<text x="663.68" y="121.35" font-size="6.8" fill="#333" font-family="Liberation Sans" text-anchor="middle" stroke="#333" stroke-width="0.22" >T</text>
<line x1="719.50" y1="113.50" x2="719.50" y2="124.30" stroke="#d4d4d4" stroke-width="0.6" />
<text x="699.75" y="121.35" font-size="6.8" fill="#333" font-family="Liberation Sans" text-anchor="middle" stroke="#333" stroke-width="0.22" >U</text>
<line x1="764.50" y1="113.50" x2="764.50" y2="124.30" stroke="#d4d4d4" stroke-width="0.6" />
<text x="742.00" y="121.35" font-size="6.8" fill="#333" font-family="Liberation Sans" text-anchor="middle" stroke="#333" stroke-width="0.22" >V</text>
<line x1="805.00" y1="113.50" x2="805.00" y2="124.30" stroke="#d4d4d4" stroke-width="0.6" />
<text x="784.75" y="121.35" font-size="6.8" fill="#333" font-family="Liberation Sans" text-anchor="middle" stroke="#333" stroke-width="0.22" >W</text>
<line x1="848.50" y1="113.50" x2="848.50" y2="124.30" stroke="#d4d4d4" stroke-width="0.6" />
<text x="826.75" y="121.35" font-size="6.8" fill="#217346" font-family="Liberation Sans" text-anchor="middle" stroke="#217346" stroke-width="0.22" >X</text>
<line x1="910.80" y1="113.50" x2="910.80" y2="124.30" stroke="#d4d4d4" stroke-width="0.6" />
<text x="879.65" y="121.35" font-size="6.8" fill="#333" font-family="Liberation Sans" text-anchor="middle" stroke="#333" stroke-width="0.22" >Y</text>
<line x1="944.00" y1="113.50" x2="944.00" y2="124.30" stroke="#d4d4d4" stroke-width="0.6" />
<text x="927.40" y="121.35" font-size="6.8" fill="#333" font-family="Liberation Sans" text-anchor="middle" stroke="#333" stroke-width="0.22" >Z</text>
<line x1="977.00" y1="113.50" x2="977.00" y2="124.30" stroke="#d4d4d4" stroke-width="0.6" />
<text x="960.50" y="121.35" font-size="6.8" fill="#333" font-family="Liberation Sans" text-anchor="middle" stroke="#333" stroke-width="0.22" >AA</text>
<line x1="1010.00" y1="113.50" x2="1010.00" y2="124.30" stroke="#d4d4d4" stroke-width="0.6" />
<rect x="805.00" y="123.10" width="43.50" height="1.40" fill="#217346" />
<line x1="0.00" y1="124.30" x2="988.50" y2="124.30" stroke="#c8c8c8" stroke-width="0.6" />
<path d="M11.5,114.5 L11.5,122.5 L3.5,122.5 Z" fill="#dcdcdc" />
<rect x="0.00" y="124.30" width="13.50" height="388.70" fill="#f0f0f0" />
<line x1="13.60" y1="112.50" x2="13.60" y2="513.00" stroke="#bdbdbd" stroke-width="0.7" />
<rect x="0.00" y="417.70" width="13.50" height="10.40" fill="#d2d2d2" />
<rect x="13.20" y="417.70" width="1.20" height="10.40" fill="#217346" />
<line x1="0.00" y1="136.90" x2="13.50" y2="136.90" stroke="#dadada" stroke-width="0.5" />
<text x="6.80" y="134.35" font-size="6.8" fill="#333" font-family="Liberation Sans" text-anchor="middle" stroke="#333" stroke-width="0.22" >3</text>
<line x1="0.00" y1="147.30" x2="13.50" y2="147.30" stroke="#dadada" stroke-width="0.5" />
<text x="6.80" y="144.75" font-size="6.8" fill="#333" font-family="Liberation Sans" text-anchor="middle" stroke="#333" stroke-width="0.22" >4</text>
<line x1="0.00" y1="157.70" x2="13.50" y2="157.70" stroke="#dadada" stroke-width="0.5" />
<text x="6.80" y="155.15" font-size="6.8" fill="#333" font-family="Liberation Sans" text-anchor="middle" stroke="#333" stroke-width="0.22" >5</text>
<line x1="0.00" y1="168.10" x2="13.50" y2="168.10" stroke="#dadada" stroke-width="0.5" />
<text x="6.80" y="165.55" font-size="6.8" fill="#333" font-family="Liberation Sans" text-anchor="middle" stroke="#333" stroke-width="0.22" >6</text>
<line x1="0.00" y1="178.50" x2="13.50" y2="178.50" stroke="#dadada" stroke-width="0.5" />
<text x="6.80" y="175.95" font-size="6.8" fill="#333" font-family="Liberation Sans" text-anchor="middle" stroke="#333" stroke-width="0.22" >7</text>
<line x1="0.00" y1="188.90" x2="13.50" y2="188.90" stroke="#dadada" stroke-width="0.5" />
<text x="6.80" y="186.35" font-size="6.8" fill="#333" font-family="Liberation Sans" text-anchor="middle" stroke="#333" stroke-width="0.22" >8</text>
<line x1="0.00" y1="199.30" x2="13.50" y2="199.30" stroke="#dadada" stroke-width="0.5" />
<text x="6.80" y="196.75" font-size="6.8" fill="#333" font-family="Liberation Sans" text-anchor="middle" stroke="#333" stroke-width="0.22" >9</text>
<line x1="0.00" y1="209.70" x2="13.50" y2="209.70" stroke="#dadada" stroke-width="0.5" />
<text x="6.80" y="207.15" font-size="6.8" fill="#333" font-family="Liberation Sans" text-anchor="middle" stroke="#333" stroke-width="0.22" >10</text>
<line x1="0.00" y1="220.10" x2="13.50" y2="220.10" stroke="#dadada" stroke-width="0.5" />
<text x="6.80" y="217.55" font-size="6.8" fill="#333" font-family="Liberation Sans" text-anchor="middle" stroke="#333" stroke-width="0.22" >11</text>
<line x1="0.00" y1="230.50" x2="13.50" y2="230.50" stroke="#dadada" stroke-width="0.5" />
<text x="6.80" y="227.95" font-size="6.8" fill="#333" font-family="Liberation Sans" text-anchor="middle" stroke="#333" stroke-width="0.22" >12</text>
<line x1="0.00" y1="240.90" x2="13.50" y2="240.90" stroke="#dadada" stroke-width="0.5" />
<text x="6.80" y="238.35" font-size="6.8" fill="#333" font-family="Liberation Sans" text-anchor="middle" stroke="#333" stroke-width="0.22" >13</text>
<line x1="0.00" y1="251.30" x2="13.50" y2="251.30" stroke="#dadada" stroke-width="0.5" />
<text x="6.80" y="248.75" font-size="6.8" fill="#333" font-family="Liberation Sans" text-anchor="middle" stroke="#333" stroke-width="0.22" >14</text>
<line x1="0.00" y1="261.70" x2="13.50" y2="261.70" stroke="#dadada" stroke-width="0.5" />
<text x="6.80" y="259.15" font-size="6.8" fill="#333" font-family="Liberation Sans" text-anchor="middle" stroke="#333" stroke-width="0.22" >15</text>
<line x1="0.00" y1="272.10" x2="13.50" y2="272.10" stroke="#dadada" stroke-width="0.5" />
<text x="6.80" y="269.55" font-size="6.8" fill="#333" font-family="Liberation Sans" text-anchor="middle" stroke="#333" stroke-width="0.22" >16</text>
<line x1="0.00" y1="282.50" x2="13.50" y2="282.50" stroke="#dadada" stroke-width="0.5" />
<text x="6.80" y="279.95" font-size="6.8" fill="#333" font-family="Liberation Sans" text-anchor="middle" stroke="#333" stroke-width="0.22" >17</text>
<line x1="0.00" y1="292.90" x2="13.50" y2="292.90" stroke="#dadada" stroke-width="0.5" />
<text x="6.80" y="290.35" font-size="6.8" fill="#333" font-family="Liberation Sans" text-anchor="middle" stroke="#333" stroke-width="0.22" >18</text>
<line x1="0.00" y1="303.30" x2="13.50" y2="303.30" stroke="#dadada" stroke-width="0.5" />
<text x="6.80" y="300.75" font-size="6.8" fill="#333" font-family="Liberation Sans" text-anchor="middle" stroke="#333" stroke-width="0.22" >19</text>
<line x1="0.00" y1="313.70" x2="13.50" y2="313.70" stroke="#dadada" stroke-width="0.5" />
<text x="6.80" y="311.15" font-size="6.8" fill="#333" font-family="Liberation Sans" text-anchor="middle" stroke="#333" stroke-width="0.22" >20</text>
<line x1="0.00" y1="324.10" x2="13.50" y2="324.10" stroke="#dadada" stroke-width="0.5" />
<text x="6.80" y="321.55" font-size="6.8" fill="#333" font-family="Liberation Sans" text-anchor="middle" stroke="#333" stroke-width="0.22" >21</text>
<line x1="0.00" y1="334.50" x2="13.50" y2="334.50" stroke="#dadada" stroke-width="0.5" />
<text x="6.80" y="331.95" font-size="6.8" fill="#333" font-family="Liberation Sans" text-anchor="middle" stroke="#333" stroke-width="0.22" >22</text>
<line x1="0.00" y1="344.90" x2="13.50" y2="344.90" stroke="#dadada" stroke-width="0.5" />
<text x="6.80" y="342.35" font-size="6.8" fill="#333" font-family="Liberation Sans" text-anchor="middle" stroke="#333" stroke-width="0.22" >23</text>
<line x1="0.00" y1="355.30" x2="13.50" y2="355.30" stroke="#dadada" stroke-width="0.5" />
<text x="6.80" y="352.75" font-size="6.8" fill="#333" font-family="Liberation Sans" text-anchor="middle" stroke="#333" stroke-width="0.22" >24</text>
<line x1="0.00" y1="365.70" x2="13.50" y2="365.70" stroke="#dadada" stroke-width="0.5" />
<text x="6.80" y="363.15" font-size="6.8" fill="#333" font-family="Liberation Sans" text-anchor="middle" stroke="#333" stroke-width="0.22" >25</text>
<line x1="0.00" y1="376.10" x2="13.50" y2="376.10" stroke="#dadada" stroke-width="0.5" />
<text x="6.80" y="373.55" font-size="6.8" fill="#333" font-family="Liberation Sans" text-anchor="middle" stroke="#333" stroke-width="0.22" >26</text>
<line x1="0.00" y1="386.50" x2="13.50" y2="386.50" stroke="#dadada" stroke-width="0.5" />
<text x="6.80" y="383.95" font-size="6.8" fill="#333" font-family="Liberation Sans" text-anchor="middle" stroke="#333" stroke-width="0.22" >27</text>
<line x1="0.00" y1="396.90" x2="13.50" y2="396.90" stroke="#dadada" stroke-width="0.5" />
<text x="6.80" y="394.35" font-size="6.8" fill="#333" font-family="Liberation Sans" text-anchor="middle" stroke="#333" stroke-width="0.22" >28</text>
<line x1="0.00" y1="407.30" x2="13.50" y2="407.30" stroke="#dadada" stroke-width="0.5" />
<text x="6.80" y="404.75" font-size="6.8" fill="#333" font-family="Liberation Sans" text-anchor="middle" stroke="#333" stroke-width="0.22" >29</text>
<line x1="0.00" y1="417.70" x2="13.50" y2="417.70" stroke="#dadada" stroke-width="0.5" />
<text x="6.80" y="415.15" font-size="6.8" fill="#333" font-family="Liberation Sans" text-anchor="middle" stroke="#333" stroke-width="0.22" >30</text>
<line x1="0.00" y1="428.10" x2="13.50" y2="428.10" stroke="#dadada" stroke-width="0.5" />
<text x="6.80" y="425.55" font-size="6.8" fill="#217346" font-family="Liberation Sans" text-anchor="middle" stroke="#217346" stroke-width="0.22" >31</text>
<line x1="0.00" y1="438.50" x2="13.50" y2="438.50" stroke="#dadada" stroke-width="0.5" />
<text x="6.80" y="435.95" font-size="6.8" fill="#333" font-family="Liberation Sans" text-anchor="middle" stroke="#333" stroke-width="0.22" >32</text>
<line x1="0.00" y1="448.90" x2="13.50" y2="448.90" stroke="#dadada" stroke-width="0.5" />
<text x="6.80" y="446.35" font-size="6.8" fill="#333" font-family="Liberation Sans" text-anchor="middle" stroke="#333" stroke-width="0.22" >33</text>
<line x1="0.00" y1="459.30" x2="13.50" y2="459.30" stroke="#dadada" stroke-width="0.5" />
<text x="6.80" y="456.75" font-size="6.8" fill="#333" font-family="Liberation Sans" text-anchor="middle" stroke="#333" stroke-width="0.22" >34</text>
<line x1="0.00" y1="469.70" x2="13.50" y2="469.70" stroke="#dadada" stroke-width="0.5" />
<text x="6.80" y="467.15" font-size="6.8" fill="#333" font-family="Liberation Sans" text-anchor="middle" stroke="#333" stroke-width="0.22" >35</text>
<line x1="0.00" y1="480.10" x2="13.50" y2="480.10" stroke="#dadada" stroke-width="0.5" />
<text x="6.80" y="477.55" font-size="6.8" fill="#333" font-family="Liberation Sans" text-anchor="middle" stroke="#333" stroke-width="0.22" >36</text>
<line x1="0.00" y1="490.50" x2="13.50" y2="490.50" stroke="#dadada" stroke-width="0.5" />
<text x="6.80" y="487.95" font-size="6.8" fill="#333" font-family="Liberation Sans" text-anchor="middle" stroke="#333" stroke-width="0.22" >37</text>
<line x1="0.00" y1="500.90" x2="13.50" y2="500.90" stroke="#dadada" stroke-width="0.5" />
<text x="6.80" y="498.35" font-size="6.8" fill="#333" font-family="Liberation Sans" text-anchor="middle" stroke="#333" stroke-width="0.22" >38</text>
<line x1="0.00" y1="511.30" x2="13.50" y2="511.30" stroke="#dadada" stroke-width="0.5" />
<text x="6.80" y="508.75" font-size="6.8" fill="#333" font-family="Liberation Sans" text-anchor="middle" stroke="#333" stroke-width="0.22" >39</text>
<rect x="988.50" y="112.50" width="11.50" height="400.50" fill="#f0f0f0" />
<line x1="988.80" y1="112.50" x2="988.80" y2="513.00" stroke="#e0e0e0" stroke-width="0.5" />
<path d="M991.8,120.5 l2.6,-3.2 l2.6,3.2 z" fill="#444" />
<rect x="992.00" y="151.00" width="5.20" height="345.60" fill="#666" rx="2.6" />
<path d="M991.8,508.5 l2.6,3.2 l2.6,-3.2 z" fill="#444" />
<defs><linearGradient id="btn" x1="0" y1="0" x2="0" y2="1"><stop offset="0" stop-color="#e6e6e6"/><stop offset="1" stop-color="#cdcdcd"/></linearGradient></defs>
<rect x="29.10" y="128.10" width="116.90" height="42.60" fill="#1f4e79" stroke="#173a62" stroke-width="0.9" rx="6" />
<text x="40.30" y="155.17" font-size="13.8" fill="#fff0a3" font-family="Liberation Sans" textLength="94.70" lengthAdjust="spacingAndGlyphs" stroke="#fff0a3" stroke-width="0.3">RealState Sales</text>
<rect x="161.70" y="128.00" width="120.30" height="43.80" fill="#1f4e79" stroke="#173a62" stroke-width="0.9" rx="6" />
<text x="193.50" y="141.44" font-size="9" fill="#fff0a3" font-family="Liberation Sans" font-weight="700" textLength="56.20" lengthAdjust="spacingAndGlyphs" >NU.PROPERTY</text>
<text x="207.70" y="162.14" font-size="17.6" fill="#fff0a3" font-family="Liberation Sans" textLength="28.30" lengthAdjust="spacingAndGlyphs" stroke="#fff0a3" stroke-width="0.3">800</text>
<rect x="298.70" y="128.70" width="126.50" height="43.80" fill="#1f4e79" stroke="#173a62" stroke-width="0.9" rx="6" />
<text x="339.80" y="142.24" font-size="9" fill="#fff0a3" font-family="Liberation Sans" font-weight="700" textLength="44.40" lengthAdjust="spacingAndGlyphs" >T.REVENUE</text>
<text x="309.50" y="162.91" font-size="17.8" fill="#fff0a3" font-family="Liberation Sans" textLength="79.50" lengthAdjust="spacingAndGlyphs" stroke="#fff0a3" stroke-width="0.3">EGP 8.31B</text>
<text x="399.70" y="162.98" font-size="11.6" fill="#fff0a3" font-family="Liberation Sans" textLength="15.00" lengthAdjust="spacingAndGlyphs" stroke="#fff0a3" stroke-width="0.35">8%</text>
<rect x="440.20" y="128.00" width="121.00" height="43.80" fill="#1f4e79" stroke="#173a62" stroke-width="0.9" rx="6" />
<text x="464.80" y="141.44" font-size="9" fill="#fff0a3" font-family="Liberation Sans" font-weight="700" textLength="71.20" lengthAdjust="spacingAndGlyphs" >Avg.DaysOfMarket</text>
<text x="487.30" y="162.14" font-size="17.6" fill="#fff0a3" font-family="Liberation Sans" textLength="27.90" lengthAdjust="spacingAndGlyphs" stroke="#fff0a3" stroke-width="0.3">189</text>
<rect x="576.70" y="128.00" width="120.30" height="43.80" fill="#1f4e79" stroke="#173a62" stroke-width="0.9" rx="6" />
<text x="608.80" y="141.44" font-size="9" fill="#fff0a3" font-family="Liberation Sans" font-weight="700" textLength="55.40" lengthAdjust="spacingAndGlyphs" >T.Square foots</text>
<text x="604.70" y="162.14" font-size="17.6" fill="#fff0a3" font-family="Liberation Sans" textLength="63.70" lengthAdjust="spacingAndGlyphs" stroke="#fff0a3" stroke-width="0.3">422,362</text>
<rect x="31.50" y="201.50" width="437.00" height="136.00" fill="#fff" stroke="#d9d9d9" stroke-width="0.8" />
<text x="240.50" y="215.74" font-size="9" fill="#222" font-family="Liberation Sans" textLength="18.20" lengthAdjust="spacingAndGlyphs" stroke="#222" stroke-width="0.22" >Total</text>
<text x="50.00" y="228.36" font-size="6" fill="#444" font-family="Liberation Sans" text-anchor="end" textLength="13.90" lengthAdjust="spacingAndGlyphs" stroke="#444" stroke-width="0.22" >500M</text>
<text x="50.00" y="240.06" font-size="6" fill="#444" font-family="Liberation Sans" text-anchor="end" textLength="13.90" lengthAdjust="spacingAndGlyphs" stroke="#444" stroke-width="0.22" >400M</text>
<text x="50.00" y="251.26" font-size="6" fill="#444" font-family="Liberation Sans" text-anchor="end" textLength="13.90" lengthAdjust="spacingAndGlyphs" stroke="#444" stroke-width="0.22" >300M</text>
<text x="50.00" y="262.46" font-size="6" fill="#444" font-family="Liberation Sans" text-anchor="end" textLength="13.90" lengthAdjust="spacingAndGlyphs" stroke="#444" stroke-width="0.22" >200M</text>
<text x="50.00" y="273.86" font-size="6" fill="#444" font-family="Liberation Sans" text-anchor="end" textLength="13.90" lengthAdjust="spacingAndGlyphs" stroke="#444" stroke-width="0.22" >100M</text>
<text x="50.00" y="285.16" font-size="6" fill="#444" font-family="Liberation Sans" text-anchor="end" textLength="8.00" lengthAdjust="spacingAndGlyphs" stroke="#444" stroke-width="0.22" >0M</text>
<polyline points="62.40,270.30 77.09,252.30 91.78,233.10 106.46,241.10 121.15,259.80 135.84,241.90 150.53,246.80 165.21,246.80 179.90,239.40 194.59,246.10 209.28,246.10 223.96,244.30 238.65,251.60 253.34,230.40 268.02,252.30 282.71,242.90 297.40,252.80 312.09,239.90 326.77,247.30 341.46,245.60 356.15,245.40 370.84,233.10 385.52,238.10 400.21,236.90 414.90,257.30" fill="none" stroke="#0c2a5b" stroke-width="1.7" stroke-linejoin="round"/>
<line x1="55.70" y1="283.60" x2="422.40" y2="283.60" stroke="#d9d9d9" stroke-width="0.6" />
<text x="62.40" y="293.90" font-size="6.1" fill="#505050" font-family="Liberation Sans" text-anchor="middle" stroke="#505050" stroke-width="0.12" >Feb</text>
<text x="77.09" y="293.90" font-size="6.1" fill="#505050" font-family="Liberation Sans" text-anchor="middle" stroke="#505050" stroke-width="0.12" >Mar</text>
<text x="91.78" y="293.90" font-size="6.1" fill="#505050" font-family="Liberation Sans" text-anchor="middle" stroke="#505050" stroke-width="0.12" >Apr</text>
<text x="106.46" y="293.90" font-size="6.1" fill="#505050" font-family="Liberation Sans" text-anchor="middle" stroke="#505050" stroke-width="0.12" >May</text>
<text x="121.15" y="293.90" font-size="6.1" fill="#505050" font-family="Liberation Sans" text-anchor="middle" stroke="#505050" stroke-width="0.12" >Jun</text>
<text x="135.84" y="293.90" font-size="6.1" fill="#505050" font-family="Liberation Sans" text-anchor="middle" stroke="#505050" stroke-width="0.12" >Jul</text>
<text x="150.53" y="293.90" font-size="6.1" fill="#505050" font-family="Liberation Sans" text-anchor="middle" stroke="#505050" stroke-width="0.12" >Aug</text>
<text x="165.21" y="293.90" font-size="6.1" fill="#505050" font-family="Liberation Sans" text-anchor="middle" stroke="#505050" stroke-width="0.12" >Sep</text>
<text x="179.90" y="293.90" font-size="6.1" fill="#505050" font-family="Liberation Sans" text-anchor="middle" stroke="#505050" stroke-width="0.12" >Oct</text>
<text x="194.59" y="293.90" font-size="6.1" fill="#505050" font-family="Liberation Sans" text-anchor="middle" stroke="#505050" stroke-width="0.12" >Nov</text>
<text x="209.28" y="293.90" font-size="6.1" fill="#505050" font-family="Liberation Sans" text-anchor="middle" stroke="#505050" stroke-width="0.12" >Dec</text>
<text x="223.96" y="293.90" font-size="6.1" fill="#505050" font-family="Liberation Sans" text-anchor="middle" stroke="#505050" stroke-width="0.12" >Jan</text>
<text x="238.65" y="293.90" font-size="6.1" fill="#505050" font-family="Liberation Sans" text-anchor="middle" stroke="#505050" stroke-width="0.12" >Feb</text>
<text x="253.34" y="293.90" font-size="6.1" fill="#505050" font-family="Liberation Sans" text-anchor="middle" stroke="#505050" stroke-width="0.12" >Mar</text>
<text x="268.02" y="293.90" font-size="6.1" fill="#505050" font-family="Liberation Sans" text-anchor="middle" stroke="#505050" stroke-width="0.12" >Apr</text>
<text x="282.71" y="293.90" font-size="6.1" fill="#505050" font-family="Liberation Sans" text-anchor="middle" stroke="#505050" stroke-width="0.12" >May</text>
<text x="297.40" y="293.90" font-size="6.1" fill="#505050" font-family="Liberation Sans" text-anchor="middle" stroke="#505050" stroke-width="0.12" >Jun</text>
<text x="312.09" y="293.90" font-size="6.1" fill="#505050" font-family="Liberation Sans" text-anchor="middle" stroke="#505050" stroke-width="0.12" >Jul</text>
<text x="326.77" y="293.90" font-size="6.1" fill="#505050" font-family="Liberation Sans" text-anchor="middle" stroke="#505050" stroke-width="0.12" >Aug</text>
<text x="341.46" y="293.90" font-size="6.1" fill="#505050" font-family="Liberation Sans" text-anchor="middle" stroke="#505050" stroke-width="0.12" >Sep</text>
<text x="356.15" y="293.90" font-size="6.1" fill="#505050" font-family="Liberation Sans" text-anchor="middle" stroke="#505050" stroke-width="0.12" >Oct</text>
<text x="370.84" y="293.90" font-size="6.1" fill="#505050" font-family="Liberation Sans" text-anchor="middle" stroke="#505050" stroke-width="0.12" >Nov</text>
<text x="385.52" y="293.90" font-size="6.1" fill="#505050" font-family="Liberation Sans" text-anchor="middle" stroke="#505050" stroke-width="0.12" >Dec</text>
<text x="400.21" y="293.90" font-size="6.1" fill="#505050" font-family="Liberation Sans" text-anchor="middle" stroke="#505050" stroke-width="0.12" >Jan</text>
<text x="414.90" y="293.90" font-size="6.1" fill="#505050" font-family="Liberation Sans" text-anchor="middle" stroke="#505050" stroke-width="0.12" >Feb</text>
<line x1="55.70" y1="283.60" x2="55.70" y2="319.60" stroke="#d9d9d9" stroke-width="0.6" />
<line x1="84.30" y1="283.60" x2="84.30" y2="307.50" stroke="#d9d9d9" stroke-width="0.6" />
<line x1="128.40" y1="283.60" x2="128.40" y2="307.50" stroke="#d9d9d9" stroke-width="0.6" />
<line x1="172.50" y1="283.60" x2="172.50" y2="307.50" stroke="#d9d9d9" stroke-width="0.6" />
<line x1="216.30" y1="283.60" x2="216.30" y2="319.60" stroke="#d9d9d9" stroke-width="0.6" />
<line x1="260.40" y1="283.60" x2="260.40" y2="307.50" stroke="#d9d9d9" stroke-width="0.6" />
<line x1="304.80" y1="283.60" x2="304.80" y2="307.50" stroke="#d9d9d9" stroke-width="0.6" />
<line x1="348.40" y1="283.60" x2="348.40" y2="307.50" stroke="#d9d9d9" stroke-width="0.6" />
<line x1="392.50" y1="283.60" x2="392.50" y2="319.60" stroke="#d9d9d9" stroke-width="0.6" />
<line x1="422.40" y1="283.60" x2="422.40" y2="319.60" stroke="#d9d9d9" stroke-width="0.6" />
<text x="70.00" y="305.60" font-size="6.1" fill="#505050" font-family="Liberation Sans" text-anchor="middle" stroke="#505050" stroke-width="0.12" >Qtr1</text>
<text x="106.50" y="305.60" font-size="6.1" fill="#505050" font-family="Liberation Sans" text-anchor="middle" stroke="#505050" stroke-width="0.12" >Qtr2</text>
<text x="150.50" y="305.60" font-size="6.1" fill="#505050" font-family="Liberation Sans" text-anchor="middle" stroke="#505050" stroke-width="0.12" >Qtr3</text>
<text x="194.40" y="305.60" font-size="6.1" fill="#505050" font-family="Liberation Sans" text-anchor="middle" stroke="#505050" stroke-width="0.12" >Qtr4</text>
<text x="238.50" y="305.60" font-size="6.1" fill="#505050" font-family="Liberation Sans" text-anchor="middle" stroke="#505050" stroke-width="0.12" >Qtr1</text>
<text x="282.60" y="305.60" font-size="6.1" fill="#505050" font-family="Liberation Sans" text-anchor="middle" stroke="#505050" stroke-width="0.12" >Qtr2</text>
<text x="326.60" y="305.60" font-size="6.1" fill="#505050" font-family="Liberation Sans" text-anchor="middle" stroke="#505050" stroke-width="0.12" >Qtr3</text>
<text x="370.60" y="305.60" font-size="6.1" fill="#505050" font-family="Liberation Sans" text-anchor="middle" stroke="#505050" stroke-width="0.12" >Qtr4</text>
<text x="407.50" y="305.60" font-size="6.1" fill="#505050" font-family="Liberation Sans" text-anchor="middle" stroke="#505050" stroke-width="0.12" >Qtr1</text>
<text x="136.00" y="317.50" font-size="6.1" fill="#505050" font-family="Liberation Sans" text-anchor="middle" stroke="#505050" stroke-width="0.12" >2023</text>
<text x="304.80" y="317.50" font-size="6.1" fill="#505050" font-family="Liberation Sans" text-anchor="middle" stroke="#505050" stroke-width="0.12" >2024</text>
<text x="407.50" y="317.50" font-size="6.1" fill="#505050" font-family="Liberation Sans" text-anchor="middle" stroke="#505050" stroke-width="0.12" >2025</text>
<line x1="432.40" y1="271.30" x2="446.80" y2="271.30" stroke="#0c2a5b" stroke-width="1.7" />
<text x="448.00" y="273.26" font-size="6" fill="#333" font-family="Liberation Sans" textLength="11.80" lengthAdjust="spacingAndGlyphs" stroke="#333" stroke-width="0.22" >Total</text>
<rect x="445.50" y="324.00" width="7.20" height="7.20" fill="#d4d4d4" stroke="#b0b0b0" stroke-width="0.5" />
<line x1="447.20" y1="327.60" x2="451.00" y2="327.60" stroke="#333" stroke-width="0.7" />
<line x1="449.10" y1="325.70" x2="449.10" y2="329.50" stroke="#333" stroke-width="0.7" />
<rect x="454.20" y="324.00" width="7.20" height="7.20" fill="#d4d4d4" stroke="#b0b0b0" stroke-width="0.5" />
<line x1="455.90" y1="327.60" x2="459.70" y2="327.60" stroke="#333" stroke-width="0.7" />
<rect x="487.50" y="194.50" width="217.00" height="146.00" fill="#fff" stroke="#d9d9d9" stroke-width="0.8" />
<text x="557.50" y="209.57" font-size="8.8" fill="#222" font-family="Liberation Sans" textLength="76.10" lengthAdjust="spacingAndGlyphs" stroke="#222" stroke-width="0.22" >Top location By Sale</text>
<text x="518.00" y="221.96" font-size="6" fill="#444" font-family="Liberation Sans" text-anchor="end" stroke="#444" stroke-width="0.22" >1.2</text>
<text x="518.00" y="233.36" font-size="6" fill="#444" font-family="Liberation Sans" text-anchor="end" stroke="#444" stroke-width="0.22" >1.15</text>
<text x="518.00" y="244.16" font-size="6" fill="#444" font-family="Liberation Sans" text-anchor="end" stroke="#444" stroke-width="0.22" >1.1</text>
<text x="518.00" y="254.96" font-size="6" fill="#444" font-family="Liberation Sans" text-anchor="end" stroke="#444" stroke-width="0.22" >1.05</text>
<text x="518.00" y="266.36" font-size="6" fill="#444" font-family="Liberation Sans" text-anchor="end" stroke="#444" stroke-width="0.22" >1</text>
<text x="518.00" y="277.76" font-size="6" fill="#444" font-family="Liberation Sans" text-anchor="end" stroke="#444" stroke-width="0.22" >0.95</text>
<text x="518.00" y="288.26" font-size="6" fill="#444" font-family="Liberation Sans" text-anchor="end" stroke="#444" stroke-width="0.22" >0.9</text>
<text x="518.00" y="299.66" font-size="6" fill="#444" font-family="Liberation Sans" text-anchor="end" stroke="#444" stroke-width="0.22" >0.85</text>
<text x="0" y="0" font-size="6.2" fill="#444" font-family="Liberation Sans" text-anchor="middle" transform="translate(499.6,257.6) rotate(-90)" textLength="20" lengthAdjust="spacingAndGlyphs">Billions</text>
<line x1="524.00" y1="297.60" x2="696.00" y2="297.60" stroke="#d9d9d9" stroke-width="0.7" />
<rect x="531.30" y="231.20" width="7.00" height="66.40" fill="#2e6db4" stroke="#1a4c94" stroke-width="0.8" />
<text x="0" y="0" font-size="6" fill="#444" stroke="#444" stroke-width="0.12" font-family="Liberation Sans" text-anchor="end" transform="translate(536.00,305.20) rotate(-45)" textLength="13.33" lengthAdjust="spacingAndGlyphs">Cairo</text>
<rect x="553.00" y="239.10" width="7.00" height="58.50" fill="#2e6db4" stroke="#1a4c94" stroke-width="0.8" />
<text x="0" y="0" font-size="6" fill="#444" stroke="#444" stroke-width="0.12" font-family="Liberation Sans" text-anchor="end" transform="translate(557.70,305.20) rotate(-45)" textLength="24.51" lengthAdjust="spacingAndGlyphs">Hurghada</text>
<rect x="574.00" y="244.80" width="7.00" height="52.80" fill="#2e6db4" stroke="#1a4c94" stroke-width="0.8" />
<text x="0" y="0" font-size="6" fill="#444" stroke="#444" stroke-width="0.12" font-family="Liberation Sans" text-anchor="end" transform="translate(578.70,305.20) rotate(-45)" textLength="11.47" lengthAdjust="spacingAndGlyphs">Giza</text>
<rect x="596.30" y="258.20" width="7.00" height="39.40" fill="#2e6db4" stroke="#1a4c94" stroke-width="0.8" />
<text x="0" y="0" font-size="6" fill="#444" stroke="#444" stroke-width="0.12" font-family="Liberation Sans" text-anchor="end" transform="translate(601.00,305.20) rotate(-45)" textLength="41.56" lengthAdjust="spacingAndGlyphs">Sharm El Sheikh</text>
<rect x="617.40" y="265.30" width="7.00" height="32.30" fill="#2e6db4" stroke="#1a4c94" stroke-width="0.8" />
<text x="0" y="0" font-size="6" fill="#444" stroke="#444" stroke-width="0.12" font-family="Liberation Sans" text-anchor="end" transform="translate(622.10,305.20) rotate(-45)" textLength="26.37" lengthAdjust="spacingAndGlyphs">Alexandria</text>
<rect x="639.00" y="268.50" width="7.00" height="29.10" fill="#2e6db4" stroke="#1a4c94" stroke-width="0.8" />
<text x="0" y="0" font-size="6" fill="#444" stroke="#444" stroke-width="0.12" font-family="Liberation Sans" text-anchor="end" transform="translate(643.70,305.20) rotate(-45)" textLength="24.81" lengthAdjust="spacingAndGlyphs">Mansoura</text>
<rect x="660.70" y="269.00" width="7.00" height="28.60" fill="#2e6db4" stroke="#1a4c94" stroke-width="0.8" />
<text x="0" y="0" font-size="6" fill="#444" stroke="#444" stroke-width="0.12" font-family="Liberation Sans" text-anchor="end" transform="translate(665.40,305.20) rotate(-45)" textLength="13.65" lengthAdjust="spacingAndGlyphs">Tanta</text>
<rect x="682.00" y="272.70" width="7.00" height="24.90" fill="#2e6db4" stroke="#1a4c94" stroke-width="0.8" />
<text x="0" y="0" font-size="6" fill="#444" stroke="#444" stroke-width="0.12" font-family="Liberation Sans" text-anchor="end" transform="translate(686.70,305.20) rotate(-45)" textLength="16.75" lengthAdjust="spacingAndGlyphs">Aswan</text>
<text x="721.00" y="217.61" font-size="7.8" fill="#1f4a8c" font-family="Liberation Sans" textLength="186.90" lengthAdjust="spacingAndGlyphs" stroke="#1f4a8c" stroke-width="0.22" >Year-over-Year Growth in Average Sold Price by Location</text>
<text x="720.30" y="238.26" font-size="7.4" fill="#111" font-family="Liberation Sans" font-weight="700" textLength="36.40" lengthAdjust="spacingAndGlyphs" stroke="#111" stroke-width="0.22" >Row Labels</text>
<text x="765.60" y="238.66" font-size="7.4" fill="#111" font-family="Liberation Sans" font-weight="700" textLength="15.50" lengthAdjust="spacingAndGlyphs" stroke="#111" stroke-width="0.22" >2023</text>
<path d="M764.0,230.6 h3 l-3,3 z" fill="#1e8a3a" />
<text x="805.80" y="238.66" font-size="7.4" fill="#111" font-family="Liberation Sans" font-weight="700" textLength="15.50" lengthAdjust="spacingAndGlyphs" stroke="#111" stroke-width="0.22" >2024</text>
<path d="M804.1999999999999,230.6 h3 l-3,3 z" fill="#1e8a3a" />
<text x="849.20" y="238.66" font-size="7.4" fill="#111" font-family="Liberation Sans" font-weight="700" textLength="15.50" lengthAdjust="spacingAndGlyphs" stroke="#111" stroke-width="0.22" >2025</text>
<path d="M847.6,230.6 h3 l-3,3 z" fill="#1e8a3a" />
<line x1="719.50" y1="240.40" x2="910.70" y2="240.40" stroke="#5eb3e4" stroke-width="0.9" />
<text x="720.30" y="248.99" font-size="7.2" fill="#111" font-family="Liberation Sans" stroke="#111" stroke-width="0.22" >Alexandria</text>
<circle cx="809.70" cy="246.10" r="3.9" fill="#5f9f80" stroke="#3f7a60" stroke-width="0.5" />
<text x="846.40" y="249.14" font-size="7.6" fill="#111" font-family="Liberation Sans" text-anchor="end" textLength="22.43" lengthAdjust="spacingAndGlyphs" stroke="#111" stroke-width="0.22" >21.31%</text>
<circle cx="853.20" cy="246.10" r="3.9" fill="#d9472b" stroke="#a83320" stroke-width="0.5" />
<text x="909.00" y="249.14" font-size="7.6" fill="#111" font-family="Liberation Sans" text-anchor="end" textLength="20.95" lengthAdjust="spacingAndGlyphs" stroke="#111" stroke-width="0.22" >-7.45%</text>
<text x="720.30" y="259.39" font-size="7.2" fill="#111" font-family="Liberation Sans" stroke="#111" stroke-width="0.22" >Aswan</text>
<circle cx="809.70" cy="256.50" r="3.9" fill="#d9472b" stroke="#a83320" stroke-width="0.5" />
<text x="846.40" y="259.54" font-size="7.6" fill="#111" font-family="Liberation Sans" text-anchor="end" textLength="20.95" lengthAdjust="spacingAndGlyphs" stroke="#111" stroke-width="0.22" >-7.40%</text>
<circle cx="853.20" cy="256.50" r="3.9" fill="#eec27c" stroke="#b8914f" stroke-width="0.5" />
<text x="909.00" y="259.54" font-size="7.6" fill="#111" font-family="Liberation Sans" text-anchor="end" textLength="18.75" lengthAdjust="spacingAndGlyphs" stroke="#111" stroke-width="0.22" >2.21%</text>
<text x="720.30" y="269.79" font-size="7.2" fill="#111" font-family="Liberation Sans" stroke="#111" stroke-width="0.22" >Cairo</text>
<circle cx="809.70" cy="266.90" r="3.9" fill="#eec27c" stroke="#b8914f" stroke-width="0.5" />
<text x="846.40" y="269.94" font-size="7.6" fill="#111" font-family="Liberation Sans" text-anchor="end" textLength="18.75" lengthAdjust="spacingAndGlyphs" stroke="#111" stroke-width="0.22" >0.76%</text>
<circle cx="853.20" cy="266.90" r="3.9" fill="#eec27c" stroke="#b8914f" stroke-width="0.5" />
<text x="909.00" y="269.94" font-size="7.6" fill="#111" font-family="Liberation Sans" text-anchor="end" textLength="18.75" lengthAdjust="spacingAndGlyphs" stroke="#111" stroke-width="0.22" >0.67%</text>
<text x="720.30" y="280.19" font-size="7.2" fill="#111" font-family="Liberation Sans" stroke="#111" stroke-width="0.22" >Giza</text>
<circle cx="809.70" cy="277.30" r="3.9" fill="#eec27c" stroke="#b8914f" stroke-width="0.5" />
<text x="846.40" y="280.34" font-size="7.6" fill="#111" font-family="Liberation Sans" text-anchor="end" textLength="18.75" lengthAdjust="spacingAndGlyphs" stroke="#111" stroke-width="0.22" >7.02%</text>
<circle cx="853.20" cy="277.30" r="3.9" fill="#d9472b" stroke="#a83320" stroke-width="0.5" />
<text x="909.00" y="280.34" font-size="7.6" fill="#111" font-family="Liberation Sans" text-anchor="end" textLength="20.95" lengthAdjust="spacingAndGlyphs" stroke="#111" stroke-width="0.22" >-8.47%</text>
<text x="720.30" y="290.59" font-size="7.2" fill="#111" font-family="Liberation Sans" stroke="#111" stroke-width="0.22" >Hurghada</text>
<circle cx="809.70" cy="287.70" r="3.9" fill="#5f9f80" stroke="#3f7a60" stroke-width="0.5" />
<text x="846.40" y="290.74" font-size="7.6" fill="#111" font-family="Liberation Sans" text-anchor="end" textLength="21.93" lengthAdjust="spacingAndGlyphs" stroke="#111" stroke-width="0.22" >11.43%</text>
<circle cx="853.20" cy="287.70" r="3.9" fill="#eec27c" stroke="#b8914f" stroke-width="0.5" />
<text x="909.00" y="290.74" font-size="7.6" fill="#111" font-family="Liberation Sans" text-anchor="end" textLength="18.75" lengthAdjust="spacingAndGlyphs" stroke="#111" stroke-width="0.22" >3.96%</text>
<text x="720.30" y="300.99" font-size="7.2" fill="#111" font-family="Liberation Sans" stroke="#111" stroke-width="0.22" >Mansoura</text>
<circle cx="809.70" cy="298.10" r="3.9" fill="#eec27c" stroke="#b8914f" stroke-width="0.5" />
<text x="846.40" y="301.14" font-size="7.6" fill="#111" font-family="Liberation Sans" text-anchor="end" textLength="18.75" lengthAdjust="spacingAndGlyphs" stroke="#111" stroke-width="0.22" >3.79%</text>
<circle cx="853.20" cy="298.10" r="3.9" fill="#5f9f80" stroke="#3f7a60" stroke-width="0.5" />
<text x="909.00" y="301.14" font-size="7.6" fill="#111" font-family="Liberation Sans" text-anchor="end" textLength="22.43" lengthAdjust="spacingAndGlyphs" stroke="#111" stroke-width="0.22" >26.76%</text>
<text x="720.30" y="311.39" font-size="7.2" fill="#111" font-family="Liberation Sans" stroke="#111" stroke-width="0.22" >Sharm El Sheikh</text>
<circle cx="809.70" cy="308.50" r="3.9" fill="#d9472b" stroke="#a83320" stroke-width="0.5" />
<text x="846.40" y="311.54" font-size="7.6" fill="#111" font-family="Liberation Sans" text-anchor="end" textLength="20.95" lengthAdjust="spacingAndGlyphs" stroke="#111" stroke-width="0.22" >-6.23%</text>
<circle cx="853.20" cy="308.50" r="3.9" fill="#5f9f80" stroke="#3f7a60" stroke-width="0.5" />
<text x="909.00" y="311.54" font-size="7.6" fill="#111" font-family="Liberation Sans" text-anchor="end" textLength="22.43" lengthAdjust="spacingAndGlyphs" stroke="#111" stroke-width="0.22" >36.53%</text>
<text x="720.30" y="321.79" font-size="7.2" fill="#111" font-family="Liberation Sans" stroke="#111" stroke-width="0.22" >Tanta</text>
<circle cx="809.70" cy="318.90" r="3.9" fill="#5f9f80" stroke="#3f7a60" stroke-width="0.5" />
<text x="846.40" y="321.94" font-size="7.6" fill="#111" font-family="Liberation Sans" text-anchor="end" textLength="22.43" lengthAdjust="spacingAndGlyphs" stroke="#111" stroke-width="0.22" >44.41%</text>
<circle cx="853.20" cy="318.90" r="3.9" fill="#eec27c" stroke="#b8914f" stroke-width="0.5" />
<text x="909.00" y="321.94" font-size="7.6" fill="#111" font-family="Liberation Sans" text-anchor="end" textLength="22.43" lengthAdjust="spacingAndGlyphs" stroke="#111" stroke-width="0.22" >10.14%</text>
<rect x="719.50" y="125.50" width="243.00" height="70.00" fill="#fff" stroke="#3aaee0" stroke-width="1" />
<text x="723.80" y="134.46" font-size="7.4" fill="#111" font-family="Liberation Sans" font-weight="700" textLength="30.70" lengthAdjust="spacingAndGlyphs" stroke="#111" stroke-width="0.22" >Sale Date</text>
<path d="M949.5,128.5 h6 l-2.3,2.8 v2.6 l-1.4,-0.7 v-1.9 z" fill="#333" />
<line x1="953.50" y1="132.50" x2="957.50" y2="136.50" stroke="#e03a2a" stroke-width="0.9" />
<line x1="957.50" y1="132.50" x2="953.50" y2="136.50" stroke="#e03a2a" stroke-width="0.9" />
<line x1="723.80" y1="139.50" x2="958.20" y2="139.50" stroke="#3aaee0" stroke-width="0.9" />
<text x="723.80" y="149.04" font-size="7.6" fill="#2f86b8" font-family="Liberation Sans" textLength="32.70" lengthAdjust="spacingAndGlyphs" stroke="#2f86b8" stroke-width="0.35" >2023-2025</text>
<text x="921.50" y="148.60" font-size="6.4" fill="#595959" font-family="Liberation Sans" textLength="27.00" lengthAdjust="spacingAndGlyphs" stroke="#595959" stroke-width="0.1" >QUARTERS</text>
<path d="M952.5,145.7 l1.4,1.4 l1.4,-1.4 z" fill="#666" />
<text x="723.80" y="160.57" font-size="6.3" fill="#595959" font-family="Liberation Sans" textLength="13.50" lengthAdjust="spacingAndGlyphs" stroke="#595959" stroke-width="0.1" >2023</text>
<text x="795.50" y="160.57" font-size="6.3" fill="#595959" font-family="Liberation Sans" textLength="13.50" lengthAdjust="spacingAndGlyphs" stroke="#595959" stroke-width="0.1" >2024</text>
<text x="867.60" y="160.57" font-size="6.3" fill="#595959" font-family="Liberation Sans" textLength="13.50" lengthAdjust="spacingAndGlyphs" stroke="#595959" stroke-width="0.1" >2025</text>
<defs><linearGradient id="tl" x1="0" y1="0" x2="0" y2="1"><stop offset="0" stop-color="#1ea2dc"/><stop offset="1" stop-color="#0a5c8c"/></linearGradient></defs>
<rect x="723.80" y="175.20" width="215.00" height="8.50" fill="url(#tl)" />
<text x="723.80" y="171.57" font-size="6.3" fill="#595959" font-family="Liberation Sans" textLength="7.80" lengthAdjust="spacingAndGlyphs" stroke="#595959" stroke-width="0.1" >Q1</text>
<text x="741.72" y="171.57" font-size="6.3" fill="#595959" font-family="Liberation Sans" textLength="7.80" lengthAdjust="spacingAndGlyphs" stroke="#595959" stroke-width="0.1" >Q2</text>
<line x1="741.72" y1="175.20" x2="741.72" y2="183.70" stroke="#7fd0f2" stroke-width="0.6" />
<text x="759.63" y="171.57" font-size="6.3" fill="#595959" font-family="Liberation Sans" textLength="7.80" lengthAdjust="spacingAndGlyphs" stroke="#595959" stroke-width="0.1" >Q3</text>
<line x1="759.63" y1="175.20" x2="759.63" y2="183.70" stroke="#7fd0f2" stroke-width="0.6" />
<text x="777.55" y="171.57" font-size="6.3" fill="#595959" font-family="Liberation Sans" textLength="7.80" lengthAdjust="spacingAndGlyphs" stroke="#595959" stroke-width="0.1" >Q4</text>
<line x1="777.55" y1="175.20" x2="777.55" y2="183.70" stroke="#7fd0f2" stroke-width="0.6" />
<text x="795.47" y="171.57" font-size="6.3" fill="#595959" font-family="Liberation Sans" textLength="7.80" lengthAdjust="spacingAndGlyphs" stroke="#595959" stroke-width="0.1" >Q1</text>
<line x1="795.47" y1="175.20" x2="795.47" y2="183.70" stroke="#7fd0f2" stroke-width="0.6" />
<text x="813.38" y="171.57" font-size="6.3" fill="#595959" font-family="Liberation Sans" textLength="7.80" lengthAdjust="spacingAndGlyphs" stroke="#595959" stroke-width="0.1" >Q2</text>
<line x1="813.38" y1="175.20" x2="813.38" y2="183.70" stroke="#7fd0f2" stroke-width="0.6" />
<text x="831.30" y="171.57" font-size="6.3" fill="#595959" font-family="Liberation Sans" textLength="7.80" lengthAdjust="spacingAndGlyphs" stroke="#595959" stroke-width="0.1" >Q3</text>
<line x1="831.30" y1="175.20" x2="831.30" y2="183.70" stroke="#7fd0f2" stroke-width="0.6" />
<text x="849.22" y="171.57" font-size="6.3" fill="#595959" font-family="Liberation Sans" textLength="7.80" lengthAdjust="spacingAndGlyphs" stroke="#595959" stroke-width="0.1" >Q4</text>
<line x1="849.22" y1="175.20" x2="849.22" y2="183.70" stroke="#7fd0f2" stroke-width="0.6" />
<text x="867.13" y="171.57" font-size="6.3" fill="#595959" font-family="Liberation Sans" textLength="7.80" lengthAdjust="spacingAndGlyphs" stroke="#595959" stroke-width="0.1" >Q1</text>
<line x1="867.13" y1="175.20" x2="867.13" y2="183.70" stroke="#7fd0f2" stroke-width="0.6" />
<text x="885.05" y="171.57" font-size="6.3" fill="#595959" font-family="Liberation Sans" textLength="7.80" lengthAdjust="spacingAndGlyphs" stroke="#595959" stroke-width="0.1" >Q2</text>
<line x1="885.05" y1="175.20" x2="885.05" y2="183.70" stroke="#7fd0f2" stroke-width="0.6" />
<text x="902.97" y="171.57" font-size="6.3" fill="#595959" font-family="Liberation Sans" textLength="7.80" lengthAdjust="spacingAndGlyphs" stroke="#595959" stroke-width="0.1" >Q3</text>
<line x1="902.97" y1="175.20" x2="902.97" y2="183.70" stroke="#7fd0f2" stroke-width="0.6" />
<text x="920.88" y="171.57" font-size="6.3" fill="#595959" font-family="Liberation Sans" textLength="7.80" lengthAdjust="spacingAndGlyphs" stroke="#595959" stroke-width="0.1" >Q4</text>
<line x1="920.88" y1="175.20" x2="920.88" y2="183.70" stroke="#7fd0f2" stroke-width="0.6" />
<rect x="723.80" y="188.20" width="234.70" height="5.60" fill="#d3ecf8" />
<rect x="723.80" y="187.50" width="7.40" height="6.50" fill="#fff" stroke="#cfcfcf" stroke-width="0.5" />
<path d="M729,188.8 l-2.6,2 l2.6,2 z" fill="#333" />
<rect x="950.80" y="187.20" width="7.70" height="6.80" fill="#fff" stroke="#cfcfcf" stroke-width="0.5" />
<path d="M953.5,188.8 l2.6,2 l-2.6,2 z" fill="#333" />
<rect x="41.50" y="348.50" width="348.00" height="150.00" fill="#fff" stroke="#a6a6a6" stroke-width="0.8" />
<rect x="47.30" y="353.20" width="70.50" height="8.20" fill="url(#btn)" />
<text x="48.00" y="359.74" font-size="6.5" fill="#111" font-family="Liberation Sans" textLength="68.80" lengthAdjust="spacingAndGlyphs" stroke="#111" stroke-width="0.15" >Average of Days on Market</text>
<text x="146.60" y="377.31" font-size="9.2" fill="#333" font-family="Liberation Sans" textLength="136.80" lengthAdjust="spacingAndGlyphs" stroke="#333" stroke-width="0.22" >Average days on market By Location</text>
<text x="56.10" y="389.76" font-size="6" fill="#444" font-family="Liberation Sans" text-anchor="end" textLength="10.00" lengthAdjust="spacingAndGlyphs" stroke="#444" stroke-width="0.22" >210</text>
<line x1="60.80" y1="387.60" x2="325.10" y2="387.60" stroke="#d2d2d2" stroke-width="0.7" />
<text x="56.10" y="402.06" font-size="6" fill="#444" font-family="Liberation Sans" text-anchor="end" textLength="10.00" lengthAdjust="spacingAndGlyphs" stroke="#444" stroke-width="0.22" >200</text>
<line x1="60.80" y1="399.90" x2="325.10" y2="399.90" stroke="#d2d2d2" stroke-width="0.7" />
<text x="56.10" y="414.06" font-size="6" fill="#444" font-family="Liberation Sans" text-anchor="end" textLength="10.00" lengthAdjust="spacingAndGlyphs" stroke="#444" stroke-width="0.22" >190</text>
<line x1="60.80" y1="411.90" x2="325.10" y2="411.90" stroke="#d2d2d2" stroke-width="0.7" />
<text x="56.10" y="426.46" font-size="6" fill="#444" font-family="Liberation Sans" text-anchor="end" textLength="10.00" lengthAdjust="spacingAndGlyphs" stroke="#444" stroke-width="0.22" >180</text>
<line x1="60.80" y1="424.30" x2="325.10" y2="424.30" stroke="#d2d2d2" stroke-width="0.7" />
<text x="56.10" y="438.16" font-size="6" fill="#444" font-family="Liberation Sans" text-anchor="end" textLength="10.00" lengthAdjust="spacingAndGlyphs" stroke="#444" stroke-width="0.22" >170</text>
<line x1="60.80" y1="436.00" x2="325.10" y2="436.00" stroke="#d2d2d2" stroke-width="0.7" />
<text x="56.10" y="450.46" font-size="6" fill="#444" font-family="Liberation Sans" text-anchor="end" textLength="10.00" lengthAdjust="spacingAndGlyphs" stroke="#444" stroke-width="0.22" >160</text>
<line x1="60.80" y1="448.30" x2="325.10" y2="448.30" stroke="#d2d2d2" stroke-width="0.7" />
<text x="56.10" y="462.86" font-size="6" fill="#444" font-family="Liberation Sans" text-anchor="end" textLength="10.00" lengthAdjust="spacingAndGlyphs" stroke="#444" stroke-width="0.22" >150</text>
<line x1="60.80" y1="460.70" x2="325.10" y2="460.70" stroke="#d2d2d2" stroke-width="0.7" />
<rect x="73.20" y="434.00" width="9.80" height="26.70" fill="#2e6db4" stroke="#1a4c94" stroke-width="0.8" />
<text x="78.10" y="470.69" font-size="5.8" fill="#505050" font-family="Liberation Sans" text-anchor="middle" stroke="#505050" stroke-width="0.22" >Sharm El</text>
<text x="78.10" y="477.69" font-size="5.8" fill="#505050" font-family="Liberation Sans" text-anchor="middle" stroke="#505050" stroke-width="0.22" >Sheikh</text>
<rect x="106.00" y="423.10" width="9.80" height="37.60" fill="#2e6db4" stroke="#1a4c94" stroke-width="0.8" />
<text x="110.90" y="470.69" font-size="5.8" fill="#505050" font-family="Liberation Sans" text-anchor="middle" stroke="#505050" stroke-width="0.22" >Alexandria</text>
<rect x="139.00" y="420.20" width="9.80" height="40.50" fill="#2e6db4" stroke="#1a4c94" stroke-width="0.8" />
<text x="143.90" y="470.69" font-size="5.8" fill="#505050" font-family="Liberation Sans" text-anchor="middle" stroke="#505050" stroke-width="0.22" >Hurghada</text>
<rect x="171.50" y="414.90" width="9.80" height="45.80" fill="#2e6db4" stroke="#1a4c94" stroke-width="0.8" />
<text x="176.40" y="470.69" font-size="5.8" fill="#505050" font-family="Liberation Sans" text-anchor="middle" stroke="#505050" stroke-width="0.22" >Cairo</text>
<rect x="204.70" y="412.80" width="9.80" height="47.90" fill="#2e6db4" stroke="#1a4c94" stroke-width="0.8" />
<text x="209.60" y="470.69" font-size="5.8" fill="#505050" font-family="Liberation Sans" text-anchor="middle" stroke="#505050" stroke-width="0.22" >Giza</text>
<rect x="237.90" y="411.00" width="9.80" height="49.70" fill="#2e6db4" stroke="#1a4c94" stroke-width="0.8" />
<text x="242.80" y="470.69" font-size="5.8" fill="#505050" font-family="Liberation Sans" text-anchor="middle" stroke="#505050" stroke-width="0.22" >Tanta</text>
<rect x="270.20" y="395.20" width="9.80" height="65.50" fill="#2e6db4" stroke="#1a4c94" stroke-width="0.8" />
<text x="275.10" y="470.69" font-size="5.8" fill="#505050" font-family="Liberation Sans" text-anchor="middle" stroke="#505050" stroke-width="0.22" >Mansoura</text>
<rect x="304.00" y="393.70" width="9.80" height="67.00" fill="#ffe699" stroke="#ffd966" stroke-width="0.5" />
<text x="308.90" y="470.69" font-size="5.8" fill="#505050" font-family="Liberation Sans" text-anchor="middle" stroke="#505050" stroke-width="0.22" >Aswan</text>
<rect x="335.70" y="390.20" width="3.80" height="3.20" fill="#1f5aa6" />
<text x="340.70" y="393.76" font-size="6" fill="#404040" font-family="Liberation Sans" textLength="40.22" lengthAdjust="spacingAndGlyphs" stroke="#404040" stroke-width="0.12" >Sharm El Sheikh</text>
<rect x="335.70" y="401.94" width="3.80" height="3.20" fill="#1f5aa6" />
<text x="340.70" y="405.50" font-size="6" fill="#404040" font-family="Liberation Sans" textLength="25.52" lengthAdjust="spacingAndGlyphs" stroke="#404040" stroke-width="0.12" >Alexandria</text>
<rect x="335.70" y="413.68" width="3.80" height="3.20" fill="#1f5aa6" />
<text x="340.70" y="417.24" font-size="6" fill="#404040" font-family="Liberation Sans" textLength="23.72" lengthAdjust="spacingAndGlyphs" stroke="#404040" stroke-width="0.12" >Hurghada</text>
<rect x="335.70" y="425.42" width="3.80" height="3.20" fill="#1f5aa6" />
<text x="340.70" y="428.98" font-size="6" fill="#404040" font-family="Liberation Sans" textLength="12.90" lengthAdjust="spacingAndGlyphs" stroke="#404040" stroke-width="0.12" >Cairo</text>
<rect x="335.70" y="437.16" width="3.80" height="3.20" fill="#1f5aa6" />
<text x="340.70" y="440.72" font-size="6" fill="#404040" font-family="Liberation Sans" textLength="11.10" lengthAdjust="spacingAndGlyphs" stroke="#404040" stroke-width="0.12" >Giza</text>
<rect x="335.70" y="448.90" width="3.80" height="3.20" fill="#1f5aa6" />
<text x="340.70" y="452.46" font-size="6" fill="#404040" font-family="Liberation Sans" textLength="13.21" lengthAdjust="spacingAndGlyphs" stroke="#404040" stroke-width="0.12" >Tanta</text>
<rect x="335.70" y="460.64" width="3.80" height="3.20" fill="#1f5aa6" />
<text x="340.70" y="464.20" font-size="6" fill="#404040" font-family="Liberation Sans" textLength="24.01" lengthAdjust="spacingAndGlyphs" stroke="#404040" stroke-width="0.12" >Mansoura</text>
<rect x="335.70" y="472.38" width="3.80" height="3.20" fill="#ffe699" />
<text x="340.70" y="475.94" font-size="6" fill="#404040" font-family="Liberation Sans" textLength="16.21" lengthAdjust="spacingAndGlyphs" stroke="#404040" stroke-width="0.12" >Aswan</text>
<rect x="47.30" y="485.00" width="31.20" height="8.60" fill="url(#btn)" />
<text x="48.50" y="492.08" font-size="6.6" fill="#111" font-family="Liberation Sans" textLength="21.50" lengthAdjust="spacingAndGlyphs" stroke="#111" stroke-width="0.15" >Location</text>
<path d="M73,488.8 l1.6,1.8 l1.6,-1.8 z" fill="#333" />
<rect x="80.00" y="485.00" width="44.50" height="8.60" fill="url(#btn)" />
<text x="81.20" y="492.08" font-size="6.6" fill="#111" font-family="Liberation Sans" textLength="35.80" lengthAdjust="spacingAndGlyphs" stroke="#111" stroke-width="0.15" >Property Type</text>
<path d="M119.5,488.8 l1.6,1.8 l1.6,-1.8 z" fill="#333" />
<rect x="363.50" y="486.20" width="7.20" height="7.20" fill="#d4d4d4" stroke="#b0b0b0" stroke-width="0.5" />
<line x1="365.20" y1="489.80" x2="369.00" y2="489.80" stroke="#333" stroke-width="0.7" />
<line x1="367.10" y1="487.90" x2="367.10" y2="491.70" stroke="#333" stroke-width="0.7" />
<rect x="374.70" y="486.20" width="7.20" height="7.20" fill="#d4d4d4" stroke="#b0b0b0" stroke-width="0.5" />
<line x1="376.40" y1="489.80" x2="380.20" y2="489.80" stroke="#333" stroke-width="0.7" />
<rect x="400.50" y="353.50" width="305.00" height="143.00" fill="#fff" stroke="#d9d9d9" stroke-width="0.8" />
<rect x="406.00" y="357.80" width="62.10" height="7.90" fill="url(#btn)" />
<text x="407.00" y="364.14" font-size="6.5" fill="#111" font-family="Liberation Sans" textLength="60.00" lengthAdjust="spacingAndGlyphs" stroke="#111" stroke-width="0.15" >Sum of Sold Price (EGP)</text>
<text x="517.80" y="382.11" font-size="9.2" fill="#333" font-family="Liberation Sans" textLength="68.90" lengthAdjust="spacingAndGlyphs" stroke="#333" stroke-width="0.22" >top property sales</text>
<text x="423.40" y="394.76" font-size="6" fill="#444" font-family="Liberation Sans" text-anchor="end" textLength="18.70" lengthAdjust="spacingAndGlyphs" stroke="#444" stroke-width="0.22" >22.00%</text>
<line x1="429.00" y1="392.60" x2="654.00" y2="392.60" stroke="#d2d2d2" stroke-width="0.7" />
<text x="423.40" y="409.56" font-size="6" fill="#444" font-family="Liberation Sans" text-anchor="end" textLength="18.70" lengthAdjust="spacingAndGlyphs" stroke="#444" stroke-width="0.22" >21.00%</text>
<line x1="429.00" y1="407.40" x2="654.00" y2="407.40" stroke="#d2d2d2" stroke-width="0.7" />
<text x="423.40" y="424.36" font-size="6" fill="#444" font-family="Liberation Sans" text-anchor="end" textLength="18.70" lengthAdjust="spacingAndGlyphs" stroke="#444" stroke-width="0.22" >20.00%</text>
<line x1="429.00" y1="422.20" x2="654.00" y2="422.20" stroke="#d2d2d2" stroke-width="0.7" />
<text x="423.40" y="439.16" font-size="6" fill="#444" font-family="Liberation Sans" text-anchor="end" textLength="18.70" lengthAdjust="spacingAndGlyphs" stroke="#444" stroke-width="0.22" >19.00%</text>
<line x1="429.00" y1="437.00" x2="654.00" y2="437.00" stroke="#d2d2d2" stroke-width="0.7" />
<text x="423.40" y="453.86" font-size="6" fill="#444" font-family="Liberation Sans" text-anchor="end" textLength="18.70" lengthAdjust="spacingAndGlyphs" stroke="#444" stroke-width="0.22" >18.00%</text>
<line x1="429.00" y1="451.70" x2="654.00" y2="451.70" stroke="#d2d2d2" stroke-width="0.7" />
<text x="423.40" y="468.66" font-size="6" fill="#444" font-family="Liberation Sans" text-anchor="end" textLength="18.70" lengthAdjust="spacingAndGlyphs" stroke="#444" stroke-width="0.22" >17.00%</text>
<line x1="429.00" y1="466.50" x2="654.00" y2="466.50" stroke="#d2d2d2" stroke-width="0.7" />
<rect x="444.70" y="398.20" width="14.80" height="68.30" fill="#ffe699" stroke="#3d85d0" stroke-width="0.8" />
<text x="451.90" y="476.09" font-size="5.8" fill="#505050" font-family="Liberation Sans" text-anchor="middle" stroke="#505050" stroke-width="0.22" >Penthouse</text>
<rect x="490.20" y="414.00" width="14.10" height="52.50" fill="#2e6db4" stroke="#1a4c94" stroke-width="0.8" />
<text x="497.40" y="476.09" font-size="5.8" fill="#505050" font-family="Liberation Sans" text-anchor="middle" stroke="#505050" stroke-width="0.22" >Villa</text>
<rect x="534.30" y="421.70" width="14.10" height="44.80" fill="#2e6db4" stroke="#1a4c94" stroke-width="0.8" />
<text x="541.50" y="476.09" font-size="5.8" fill="#505050" font-family="Liberation Sans" text-anchor="middle" stroke="#505050" stroke-width="0.22" >Apartment</text>
<rect x="579.00" y="437.40" width="14.10" height="29.10" fill="#2e6db4" stroke="#1a4c94" stroke-width="0.8" />
<text x="586.20" y="476.09" font-size="5.8" fill="#505050" font-family="Liberation Sans" text-anchor="middle" stroke="#505050" stroke-width="0.22" >Studio</text>
<rect x="624.50" y="438.80" width="14.10" height="27.70" fill="#2e6db4" stroke="#1a4c94" stroke-width="0.8" />
<text x="631.70" y="476.09" font-size="5.8" fill="#505050" font-family="Liberation Sans" text-anchor="middle" stroke="#505050" stroke-width="0.22" >Duplex</text>
<rect x="665.00" y="409.50" width="4.00" height="3.00" fill="#ffe699" stroke="#2e6fbd" stroke-width="0.6" />
<text x="669.60" y="412.76" font-size="6" fill="#404040" font-family="Liberation Sans" textLength="26.40" lengthAdjust="spacingAndGlyphs" stroke="#404040" stroke-width="0.12" >Penthouse</text>
<rect x="665.00" y="420.92" width="4.20" height="3.60" fill="#1f5aa6" />
<text x="669.60" y="424.48" font-size="6" fill="#404040" font-family="Liberation Sans" textLength="10.33" lengthAdjust="spacingAndGlyphs" stroke="#404040" stroke-width="0.12" >Villa</text>
<rect x="665.00" y="432.64" width="4.20" height="3.60" fill="#1f5aa6" />
<text x="669.60" y="436.20" font-size="6" fill="#404040" font-family="Liberation Sans" textLength="25.47" lengthAdjust="spacingAndGlyphs" stroke="#404040" stroke-width="0.12" >Apartment</text>
<rect x="665.00" y="444.36" width="4.20" height="3.60" fill="#1f5aa6" />
<text x="669.60" y="447.92" font-size="6" fill="#404040" font-family="Liberation Sans" textLength="15.65" lengthAdjust="spacingAndGlyphs" stroke="#404040" stroke-width="0.12" >Studio</text>
<rect x="665.00" y="456.08" width="4.20" height="3.60" fill="#1f5aa6" />
<text x="669.60" y="459.64" font-size="6" fill="#404040" font-family="Liberation Sans" textLength="17.18" lengthAdjust="spacingAndGlyphs" stroke="#404040" stroke-width="0.12" >Duplex</text>
<rect x="406.00" y="483.80" width="45.60" height="8.00" fill="url(#btn)" />
<text x="407.20" y="490.18" font-size="6.6" fill="#111" font-family="Liberation Sans" textLength="36.80" lengthAdjust="spacingAndGlyphs" stroke="#111" stroke-width="0.15" >Property Type</text>
<path d="M446,486.8 l1.6,1.8 l1.6,-1.8 z" fill="#333" />
<rect x="805.50" y="417.50" width="43.00" height="11.00" fill="none" stroke="#124d22" stroke-width="1.1" />
<rect x="847.00" y="427.00" width="3.00" height="3.00" fill="#111" stroke="#fff" stroke-width="0.5" />
<rect x="717.50" y="349.50" width="99.00" height="99.00" fill="#fff" stroke="#3aa8e0" stroke-width="1" />
<text x="722.80" y="359.76" font-size="7.4" fill="#111" font-family="Liberation Sans" font-weight="700" textLength="45.50" lengthAdjust="spacingAndGlyphs" stroke="#111" stroke-width="0.22" >Property Type</text>
<line x1="789.00" y1="354.10" x2="793.50" y2="354.10" stroke="#333" stroke-width="0.7" />
<path d="M786,353.70000000000005 l0.9,0.9 l1.4,-1.6" fill="none" stroke="#333" stroke-width="0.55" />
<line x1="789.00" y1="356.70" x2="793.50" y2="356.70" stroke="#333" stroke-width="0.7" />
<path d="M786,356.30000000000007 l0.9,0.9 l1.4,-1.6" fill="none" stroke="#333" stroke-width="0.55" />
<line x1="789.00" y1="359.30" x2="793.50" y2="359.30" stroke="#333" stroke-width="0.7" />
<path d="M786,358.90000000000003 l0.9,0.9 l1.4,-1.6" fill="none" stroke="#333" stroke-width="0.55" />
<path d="M803.0,353.3 h7 l-2.7,3.2 v3.3 l-1.6,-0.9 v-2.4 z" fill="none" stroke="#999" stroke-width="0.7" />
<line x1="722.00" y1="364.00" x2="812.00" y2="364.00" stroke="#9fd3ef" stroke-width="1.5" />
<rect x="722.40" y="367.30" width="89.50" height="13.30" fill="#1c9ad6" rx="1.5" />
<text x="727.00" y="376.91" font-size="7.4" fill="#fff" font-family="Liberation Sans" stroke="#fff" stroke-width="0.18">Apartment</text>
<rect x="722.40" y="382.90" width="89.50" height="13.30" fill="#1c9ad6" rx="1.5" />
<text x="727.00" y="392.51" font-size="7.4" fill="#fff" font-family="Liberation Sans" stroke="#fff" stroke-width="0.18">Duplex</text>
<rect x="722.40" y="398.50" width="89.50" height="13.30" fill="#1c9ad6" rx="1.5" />
<text x="727.00" y="408.11" font-size="7.4" fill="#fff" font-family="Liberation Sans" stroke="#fff" stroke-width="0.18">Penthouse</text>
<rect x="722.40" y="414.10" width="89.50" height="13.30" fill="#1c9ad6" rx="1.5" />
<text x="727.00" y="423.71" font-size="7.4" fill="#fff" font-family="Liberation Sans" stroke="#fff" stroke-width="0.18">Studio</text>
<rect x="722.40" y="429.70" width="89.50" height="13.30" fill="#1c9ad6" rx="1.5" />
<text x="727.00" y="439.31" font-size="7.4" fill="#fff" font-family="Liberation Sans" stroke="#fff" stroke-width="0.18">Villa</text>
<rect x="859.50" y="338.50" width="106.00" height="145.00" fill="#fff" stroke="#3aa8e0" stroke-width="1" />
<text x="864.80" y="348.86" font-size="7.4" fill="#111" font-family="Liberation Sans" font-weight="700" textLength="29.00" lengthAdjust="spacingAndGlyphs" stroke="#111" stroke-width="0.22" >Location</text>
<line x1="938.00" y1="343.20" x2="942.50" y2="343.20" stroke="#333" stroke-width="0.7" />
<path d="M935,342.8 l0.9,0.9 l1.4,-1.6" fill="none" stroke="#333" stroke-width="0.55" />
<line x1="938.00" y1="345.80" x2="942.50" y2="345.80" stroke="#333" stroke-width="0.7" />
<path d="M935,345.40000000000003 l0.9,0.9 l1.4,-1.6" fill="none" stroke="#333" stroke-width="0.55" />
<line x1="938.00" y1="348.40" x2="942.50" y2="348.40" stroke="#333" stroke-width="0.7" />
<path d="M935,348.0 l0.9,0.9 l1.4,-1.6" fill="none" stroke="#333" stroke-width="0.55" />
<path d="M951.8,342.4 h7 l-2.7,3.2 v3.3 l-1.6,-0.9 v-2.4 z" fill="none" stroke="#999" stroke-width="0.7" />
<line x1="864.00" y1="352.80" x2="961.00" y2="352.80" stroke="#9fd3ef" stroke-width="1.5" />
<rect x="864.20" y="356.50" width="85.40" height="13.10" fill="#1c9ad6" rx="1.5" />
<text x="868.80" y="366.01" font-size="7.4" fill="#fff" font-family="Liberation Sans" stroke="#fff" stroke-width="0.18">Alexandria</text>
<rect x="864.20" y="372.10" width="85.40" height="13.10" fill="#1c9ad6" rx="1.5" />
<text x="868.80" y="381.61" font-size="7.4" fill="#fff" font-family="Liberation Sans" stroke="#fff" stroke-width="0.18">Aswan</text>
<rect x="864.20" y="387.70" width="85.40" height="13.10" fill="#1c9ad6" rx="1.5" />
<text x="868.80" y="397.21" font-size="7.4" fill="#fff" font-family="Liberation Sans" stroke="#fff" stroke-width="0.18">Cairo</text>
<rect x="864.20" y="403.30" width="85.40" height="13.10" fill="#1c9ad6" rx="1.5" />
<text x="868.80" y="412.81" font-size="7.4" fill="#fff" font-family="Liberation Sans" stroke="#fff" stroke-width="0.18">Giza</text>
<rect x="864.20" y="418.90" width="85.40" height="13.10" fill="#1c9ad6" rx="1.5" />
<text x="868.80" y="428.41" font-size="7.4" fill="#fff" font-family="Liberation Sans" stroke="#fff" stroke-width="0.18">Hurghada</text>
<rect x="864.20" y="434.50" width="85.40" height="13.10" fill="#1c9ad6" rx="1.5" />
<text x="868.80" y="444.01" font-size="7.4" fill="#fff" font-family="Liberation Sans" stroke="#fff" stroke-width="0.18">Mansoura</text>
<rect x="864.20" y="450.10" width="85.40" height="13.10" fill="#1c9ad6" rx="1.5" />
<text x="868.80" y="459.61" font-size="7.4" fill="#fff" font-family="Liberation Sans" stroke="#fff" stroke-width="0.18">Sharm El Sheikh</text>
<rect x="864.20" y="465.70" width="85.40" height="13.10" fill="#1c9ad6" rx="1.5" />
<text x="868.80" y="475.21" font-size="7.4" fill="#fff" font-family="Liberation Sans" stroke="#fff" stroke-width="0.18">Tanta</text>
<rect x="952.40" y="357.00" width="8.60" height="121.50" fill="#f7f7f7" />
<path d="M954.8,361.2 l1.9,-2 l1.9,2" fill="none" stroke="#333" stroke-width="0.8" />
<rect x="953.20" y="364.70" width="7.00" height="90.50" fill="#c8c8c8" />
<path d="M954.8,472.8 l1.9,2 l1.9,-2" fill="none" stroke="#333" stroke-width="0.8" />
<text x="833.00" y="502.10" font-size="10" fill="#a0a0a0" font-family="Liberation Sans" textLength="81.50" lengthAdjust="spacingAndGlyphs" stroke="#a0a0a0" stroke-width="0.1" >Activate Windows</text>
<text x="833.00" y="513.04" font-size="7.6" fill="#a6a6a6" font-family="Liberation Sans" textLength="122.00" lengthAdjust="spacingAndGlyphs" stroke="#a6a6a6" stroke-width="0.05" >Go to Settings to activate Windows.</text>
<rect x="0.00" y="513.00" width="1000.00" height="17.00" fill="#f0f0f0" />
<line x1="0.00" y1="513.00" x2="1000.00" y2="513.00" stroke="#d6d6d6" stroke-width="0.6" />
<path d="M17.5,518.8 l-2,2.5 l2,2.5" fill="none" stroke="#888" stroke-width="0.7" />
<path d="M32.5,518.8 l2,2.5 l-2,2.5" fill="none" stroke="#888" stroke-width="0.7" />
<text x="65.00" y="524.09" font-size="7.2" fill="#333" font-family="Liberation Sans" textLength="18.30" lengthAdjust="spacingAndGlyphs" stroke="#333" stroke-width="0.22" >DATA</text>
<line x1="90.50" y1="516.50" x2="90.50" y2="526.00" stroke="#cfcfcf" stroke-width="0.6" />
<text x="96.80" y="524.09" font-size="7.2" fill="#333" font-family="Liberation Sans" textLength="22.00" lengthAdjust="spacingAndGlyphs" stroke="#333" stroke-width="0.22" >Sheet3</text>
<line x1="125.00" y1="516.50" x2="125.00" y2="526.00" stroke="#cfcfcf" stroke-width="0.6" />
<text x="131.80" y="524.09" font-size="7.2" fill="#333" font-family="Liberation Sans" textLength="21.50" lengthAdjust="spacingAndGlyphs" stroke="#333" stroke-width="0.22" >Sheet1</text>
<rect x="162.50" y="513.80" width="44.50" height="13.70" fill="#fdfdfd" rx="1.5" filter="url(#sh)"/>
<text x="166.80" y="522.94" font-size="7.6" fill="#111" font-family="Liberation Sans" textLength="35.20" lengthAdjust="spacingAndGlyphs" stroke="#111" stroke-width="0.4" >Dashboard</text>
<rect x="166.80" y="525.00" width="36.00" height="1.20" fill="#163d26" />
<line x1="209.50" y1="516.50" x2="209.50" y2="526.00" stroke="#cfcfcf" stroke-width="0.6" />
<line x1="231.30" y1="521.30" x2="236.30" y2="521.30" stroke="#444" stroke-width="0.7" />
<line x1="233.80" y1="518.80" x2="233.80" y2="523.80" stroke="#444" stroke-width="0.7" />
<circle cx="601.50" cy="519.30" r="0.6" fill="#222" />
<circle cx="601.50" cy="521.10" r="0.6" fill="#222" />
<circle cx="601.50" cy="522.90" r="0.6" fill="#222" />
<path d="M612.6,521.1 l3.2,-2.2 v4.4 z" fill="#444" />
<rect x="619.00" y="518.90" width="341.60" height="4.20" fill="#3a3a3a" rx="2.1" />
<path d="M984.6,518.9 l3,2.2 l-3,2.2 z" fill="#444" />
<rect x="0.00" y="530.00" width="1000.00" height="11.50" fill="#f0f0f0" />
<line x1="0.00" y1="530.30" x2="1000.00" y2="530.30" stroke="#fbfbfb" stroke-width="0.8" />
<text x="5.50" y="538.68" font-size="6.6" fill="#222" font-family="Liberation Sans" font-weight="700" textLength="16.50" lengthAdjust="spacingAndGlyphs" stroke="#222" stroke-width="0.22" >Ready</text>
<rect x="32.30" y="532.80" width="7.70" height="6.70" fill="none" stroke="#444" stroke-width="0.7" />
<line x1="32.30" y1="535.00" x2="40.00" y2="535.00" stroke="#444" stroke-width="0.5" />
<circle cx="37.50" cy="537.20" r="1.4" fill="none" stroke="#444" stroke-width="0.5" />
<path d="M49,539.5 l2.8,-5.5 l2.8,5.5 M50.5,533.5 h2.6" fill="none" stroke="#333" stroke-width="0.7" />
<line x1="53.00" y1="537.00" x2="55.60" y2="539.60" stroke="#333" stroke-width="0.6" />
<line x1="55.60" y1="537.00" x2="53.00" y2="539.60" stroke="#333" stroke-width="0.6" />
<text x="58.30" y="538.75" font-size="6.8" fill="#222" font-family="Liberation Sans" textLength="65.50" lengthAdjust="spacingAndGlyphs" stroke="#222" stroke-width="0.22" >Accessibility: Investigate</text>
<rect x="844.30" y="531.00" width="19.70" height="10.00" fill="#dcdcdc" />
<rect x="850.50" y="533.20" width="7.00" height="6.00" fill="none" stroke="#333" stroke-width="0.7" />
<line x1="850.50" y1="535.20" x2="857.50" y2="535.20" stroke="#333" stroke-width="0.5" />
<line x1="850.50" y1="537.20" x2="857.50" y2="537.20" stroke="#333" stroke-width="0.5" />
<line x1="852.80" y1="533.20" x2="852.80" y2="539.20" stroke="#333" stroke-width="0.5" />
<rect x="871.50" y="533.20" width="7.00" height="6.00" fill="none" stroke="#333" stroke-width="0.7" />
<line x1="873.50" y1="533.20" x2="873.50" y2="539.20" stroke="#333" stroke-width="0.5" />
<line x1="876.50" y1="533.20" x2="876.50" y2="539.20" stroke="#333" stroke-width="0.5" />
<path d="M892.2,533 v6.2 h7 v-6.2 M894.5,533 v3 M897,533 v3" fill="none" stroke="#333" stroke-width="0.7" />
<line x1="909.50" y1="535.50" x2="912.20" y2="535.50" stroke="#444" stroke-width="0.6" />
<line x1="915.50" y1="535.50" x2="968.50" y2="535.50" stroke="#555" stroke-width="0.6" />
<rect x="941.20" y="532.80" width="2.60" height="5.40" fill="#555" />
<line x1="971.00" y1="535.50" x2="974.50" y2="535.50" stroke="#444" stroke-width="0.6" />
<line x1="972.75" y1="533.80" x2="972.75" y2="537.20" stroke="#444" stroke-width="0.6" />
<text x="982.00" y="538.18" font-size="6.6" fill="#222" font-family="Liberation Sans" textLength="13.50" lengthAdjust="spacingAndGlyphs" stroke="#222" stroke-width="0.22" >100%</text>
<rect x="0.00" y="541.00" width="1000.00" height="21.00" fill="#1e1e1e" />
<rect x="0.00" y="541.00" width="1000.00" height="1.60" fill="#0e0e0e" />
<path d="M8,547.9 L12,547.3 V551.2 H8 Z M12.6,547.2 L17,546.5 V551.2 H12.6 Z M8,551.9 H12 V555.7 L8,555.1 Z M12.6,551.9 H17 V556.5 L12.6,555.8 Z" fill="#fff" />
<rect x="26.10" y="541.50" width="147.60" height="20.50" fill="#f2f2f2" />
<line x1="26.10" y1="542.00" x2="173.70" y2="542.00" stroke="#cfcfcf" stroke-width="1" />
<circle cx="36.50" cy="549.50" r="2.9" fill="none" stroke="#222" stroke-width="0.9" />
<line x1="34.50" y1="551.70" x2="31.80" y2="554.80" stroke="#222" stroke-width="1" />
<text x="46.40" y="554.99" font-size="8.3" fill="#222" font-family="Liberation Sans" textLength="66.10" lengthAdjust="spacingAndGlyphs" stroke="#222" stroke-width="0.22" >Type here to search</text>
<path d="M150.1,545.5 Q151.724,549.6759999999999 155.9,551.3 Q151.724,552.924 150.1,557.0999999999999 Q148.476,552.924 144.29999999999998,551.3 Q148.476,549.6759999999999 150.1,545.5 Z" fill="#f7b918" />
<path d="M161.7,550.1 Q162.54,552.26 164.7,553.1 Q162.54,553.94 161.7,556.1 Q160.85999999999999,553.94 158.7,553.1 Q160.85999999999999,552.26 161.7,550.1 Z" fill="#f7b918" />
<path d="M140,553.3 Q140.616,554.884 142.2,555.5 Q140.616,556.116 140,557.7 Q139.384,556.116 137.8,555.5 Q139.384,554.884 140,553.3 Z" fill="#2f8ee0" />
<circle cx="158.50" cy="546.20" r="0.9" fill="#e34b4b" />
<circle cx="168.30" cy="556.30" r="0.9" fill="#5cb85c" />
<rect x="183.30" y="547.80" width="6.20" height="7.40" fill="none" stroke="#fff" stroke-width="1.1" />
<line x1="181.80" y1="549.50" x2="181.80" y2="553.50" stroke="#fff" stroke-width="0.9" />
<path d="M191.6,547.5 v2.2 M191.6,550.5 v2.2 M191.6,553.5 v2" fill="none" stroke="#fff" stroke-width="1" />
<path d="M209.3,557.2 l1.1,-3.3 a5.6,5.6 0 1 1 2.2,2.2 z" fill="none" stroke="#25d366" stroke-width="1.4" />
<path d="M211.9,549.3 q0,0 1,-0.5 l1,1.6 l-0.8,0.8 q0.8,1.8 2.6,2.6 l0.8,-0.8 l1.6,1 l-0.5,1 q-4.5,0 -5.7,-5.7 z" fill="#25d366" />
<rect x="233.50" y="546.50" width="12.50" height="10.00" fill="#f7c444" rx="0.8" />
<rect x="233.50" y="549.00" width="12.50" height="7.50" fill="#fcd860" rx="0.8" />
<rect x="236.50" y="551.50" width="6.50" height="5.00" fill="#2e8bd8" />
<path d="M265,551.5 m0,-6.2 a6.2,6.2 0 0 1 5.37,9.30 L265,551.5 Z" fill="#db4437" />
<circle cx="265" cy="551.5" r="6.2" fill="#0f9d58"/>
<path d="M259.63,548.40 A6.2,6.2 0 0 1 270.37,548.40 L265,551.5 Z" fill="#db4437" />
<path d="M270.37,548.40 A6.2,6.2 0 0 1 265.00,557.70 L265,551.5 Z" fill="#f4b400" />
<circle cx="265.00" cy="551.50" r="2.976" fill="#fff" />
<circle cx="265.00" cy="551.50" r="2.2319999999999998" fill="#4285f4" />
<rect x="286.00" y="545.50" width="7.00" height="11.50" fill="#f2d24b" rx="0.6" />
<line x1="290.00" y1="549.00" x2="296.00" y2="556.00" stroke="#9a5bd6" stroke-width="1" />
<line x1="296.00" y1="549.00" x2="290.00" y2="556.00" stroke="#9a5bd6" stroke-width="1" />
<path d="M284.5,548 v-3 h3 M292.5,545 h3 v3 M284.5,555 v3 h3" fill="none" stroke="#7ac143" stroke-width="0.7" />
<path d="M319.60,553.77 A4.2,4.2 0 0 1 312.80,553.77" fill="none" stroke="#2f6ef0" stroke-width="2.8" />
<path d="M312.36,553.01 A4.2,4.2 0 0 1 315.76,547.12" fill="none" stroke="#3cc4f4" stroke-width="2.8" />
<path d="M316.64,547.12 A4.2,4.2 0 0 1 320.04,553.01" fill="none" stroke="#86def6" stroke-width="2.8" />
<path d="M339,557 l-1.5,-5 l3.5,-6 l3.5,3.5 l-0.5,6.5 z" fill="#8b5cf6" />
<path d="M341,546 l3.5,3.5 l-2.5,2 z" fill="#c4b5fd" />
<rect x="361.00" y="545.20" width="12.00" height="12.60" fill="#2d5e8e" rx="1" />
<path d="M363.5,556 q2,-9 8,-8" fill="none" stroke="#cde" stroke-width="0.7" />
<path d="M364,549 l6,6" fill="none" stroke="#cde" stroke-width="0.5" />
<rect x="388.50" y="550.00" width="3.00" height="7.50" fill="#e8b513" />
<rect x="391.80" y="547.50" width="3.00" height="10.00" fill="#f2c811" />
<rect x="395.10" y="545.00" width="2.90" height="12.50" fill="#f6d54a" />
<circle cx="418.30" cy="551.50" r="6" fill="#1f82dc" />
<path d="M412.6,549.6 A6,6 0 0 1 424.3,551.8 Q424,555.3 420.6,555.3 Q417.6,555.2 417.8,552.4 Q418.2,549.6 421.2,549.8 Q417,546.8 412.6,549.6 z" fill="#52cf86" />
<circle cx="420.40" cy="552.40" r="1.7" fill="#1e1e1e" />
<path d="M444,551.5 m0,-6.2 a6.2,6.2 0 0 1 5.37,9.30 L444,551.5 Z" fill="#db4437" />
<circle cx="444" cy="551.5" r="6.2" fill="#0f9d58"/>
<path d="M438.63,548.40 A6.2,6.2 0 0 1 449.37,548.40 L444,551.5 Z" fill="#db4437" />
<path d="M449.37,548.40 A6.2,6.2 0 0 1 444.00,557.70 L444,551.5 Z" fill="#f4b400" />
<circle cx="444.00" cy="551.50" r="2.976" fill="#fff" />
<circle cx="444.00" cy="551.50" r="2.2319999999999998" fill="#4285f4" />
<circle cx="448.30" cy="555.50" r="2.5" fill="#c0392b" />
<rect x="457.00" y="541.50" width="25.20" height="20.50" fill="#3a3a3a" />
<rect x="463.00" y="545.50" width="13.00" height="12.00" fill="#21a366" rx="1" />
<rect x="460.50" y="547.50" width="7.50" height="8.00" fill="#107c41" rx="0.8" />
<text x="464.20" y="553.96" font-size="6" fill="#fff" font-family="Liberation Sans" font-weight="700" text-anchor="middle" >x</text>
<path d="M494.8,551.5 m0,-6.2 a6.2,6.2 0 0 1 5.37,9.30 L494.8,551.5 Z" fill="#db4437" />
<circle cx="494.8" cy="551.5" r="6.2" fill="#0f9d58"/>
<path d="M489.43,548.40 A6.2,6.2 0 0 1 500.17,548.40 L494.8,551.5 Z" fill="#db4437" />
<path d="M500.17,548.40 A6.2,6.2 0 0 1 494.80,557.70 L494.8,551.5 Z" fill="#f4b400" />
<circle cx="494.80" cy="551.50" r="2.976" fill="#fff" />
<circle cx="494.80" cy="551.50" r="2.2319999999999998" fill="#4285f4" />
<circle cx="499.00" cy="555.50" r="2.5" fill="#e0457b" />
<rect x="433.60" y="561.00" width="20.70" height="1.00" fill="#8fd3f4" />
<rect x="457.00" y="561.00" width="25.20" height="1.00" fill="#8fd3f4" />
<rect x="484.00" y="561.00" width="20.70" height="1.00" fill="#8fd3f4" />
<circle cx="794.30" cy="551.80" r="5" fill="#f5a524" />
<circle cx="793.30" cy="553.00" r="3.2" fill="#f7b733" />
<circle cx="798.00" cy="547.60" r="2.5" fill="#e81123" />
<text x="798.00" y="549.31" font-size="4.2" fill="#fff" font-family="Liberation Sans" font-weight="700" text-anchor="middle" >2</text>
<text x="804.60" y="554.61" font-size="7.8" fill="#fff" font-family="Liberation Sans" textLength="16.10" lengthAdjust="spacingAndGlyphs" >33°C</text>
<text x="825.00" y="554.68" font-size="8" fill="#fff" font-family="Liberation Sans" textLength="23.20" lengthAdjust="spacingAndGlyphs" >مشمس</text>
<path d="M861.5,553.5 l2.3,-2.5 l2.3,2.5" fill="none" stroke="#fff" stroke-width="0.8" />
<rect x="873.50" y="546.50" width="5.00" height="10.00" fill="none" stroke="#fff" stroke-width="0.7" rx="1" />
<circle cx="888.00" cy="551.50" r="3" fill="#bbb" />
<circle cx="890.50" cy="554.30" r="1.6" fill="#e81123" />
<rect x="897.00" y="547.00" width="8.00" height="6.50" fill="none" stroke="#fff" stroke-width="0.7" />
<line x1="899.00" y1="556.00" x2="903.00" y2="556.00" stroke="#fff" stroke-width="0.7" />
<path d="M909,550 h1.8 l2.2,-2.5 v8 l-2.2,-2.5 h-1.8 z" fill="none" stroke="#fff" stroke-width="0.6" />
<path d="M914.5,549.5 q1.5,2 0,4 M916.5,548 q2.5,3.5 0,7" fill="none" stroke="#fff" stroke-width="0.6" />
<text x="923.50" y="554.25" font-size="6.8" fill="#fff" font-family="Liberation Sans" textLength="12.30" lengthAdjust="spacingAndGlyphs" >ENG</text>
<text x="944.60" y="549.25" font-size="6.8" fill="#fff" font-family="Liberation Sans" textLength="22.40" lengthAdjust="spacingAndGlyphs" >1:39 PM</text>
<text x="941.70" y="558.05" font-size="6.8" fill="#fff" font-family="Liberation Sans" textLength="28.00" lengthAdjust="spacingAndGlyphs" >9/30/2025</text>
<path d="M977.5,546.5 h9.5 v7 h-3.5 l-1.5,2 l-1.5,-2 h-3 z" fill="none" stroke="#fff" stroke-width="0.8" />
</svg>
</body></html>
